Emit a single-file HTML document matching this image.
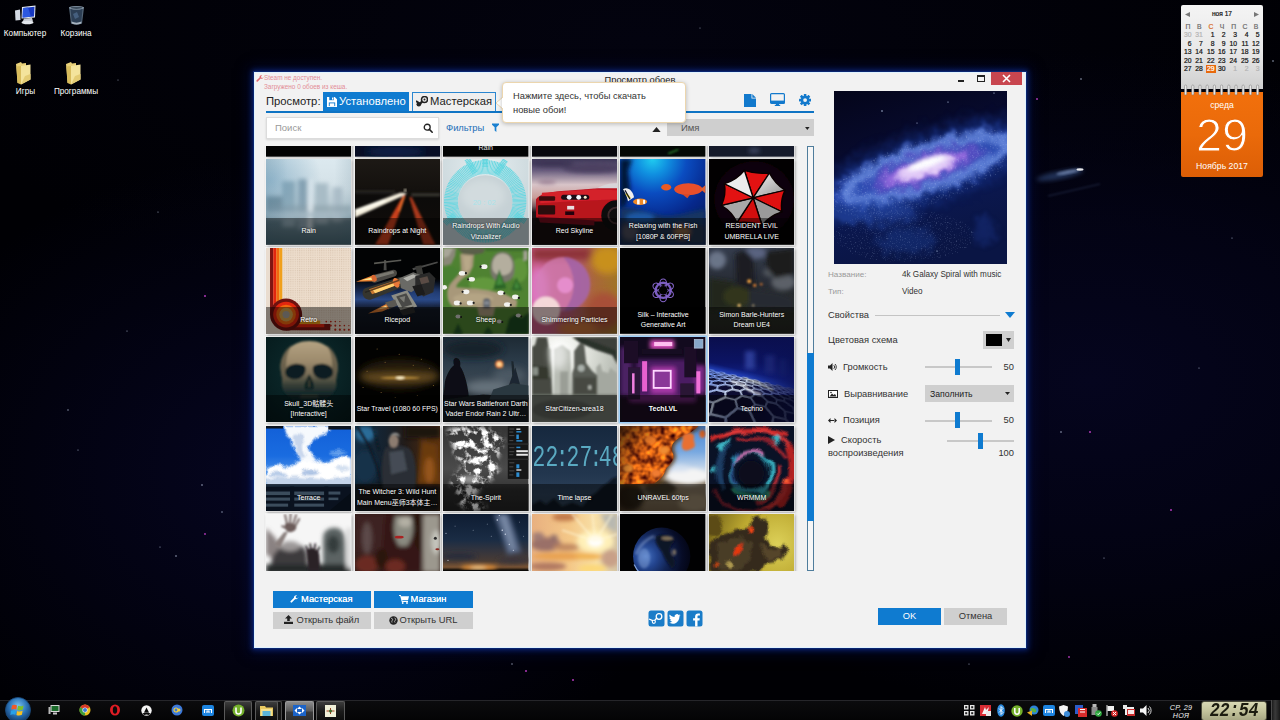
<!DOCTYPE html>
<html lang="ru">
<head>
<meta charset="utf-8">
<title>Просмотр обоев</title>
<style>
*{box-sizing:border-box;margin:0;padding:0}
html,body{width:1280px;height:720px;overflow:hidden;background:#000004;font-family:"Liberation Sans","DejaVu Sans",sans-serif;}
.abs{position:absolute}
#desk{position:absolute;left:0;top:0;width:1280px;height:720px;overflow:hidden;
 background:
 radial-gradient(ellipse 520px 330px at 1090px 380px,#05051e 0%,rgba(4,4,26,.7) 50%,rgba(0,0,6,0) 100%),
 radial-gradient(ellipse 420px 320px at 300px 470px,#060622 0%,rgba(4,4,26,.7) 50%,rgba(0,0,6,0) 100%),
 radial-gradient(ellipse 700px 300px at 640px 40px,#03030f 0%,rgba(0,0,6,0) 100%),
 #000004;}
/* window */
#win{position:absolute;left:254px;top:72px;width:772px;height:576px;background:#f2f2f2;
 box-shadow:0 0 0 1px #0a2570,0 0 5px 2px #0a2272,0 0 13px 4px rgba(8,22,90,.5);outline:1px solid #dff2ff;outline-offset:-1px}
#win *{position:absolute}
.t{white-space:nowrap;line-height:1}

.th{width:85.400px;height:85.700px;overflow:hidden;box-shadow:0 0 0 1px rgba(255,255,255,.55),1px 1px 3px rgba(0,0,0,.45)}
.th.hl{box-shadow:0 0 0 1.500px #9ccdf6,1px 1px 3px rgba(0,0,0,.3)}
.th svg{left:0;top:0;width:85.400px;height:85.700px}
.lb{left:0;top:58.600px;width:85.400px;height:27.100px;background:rgba(0,0,0,.45);color:#fff;font-size:7px;line-height:10.200px;text-align:center;display:flex;align-items:center;justify-content:center;text-shadow:0 0 2px rgba(0,0,0,.8);font-family:"Liberation Sans","Noto Sans CJK SC",sans-serif;white-space:nowrap}
.lb span{position:static!important;display:block}
.lb b{position:static!important}

.dl{position:absolute;color:#fff;font-size:8.200px;line-height:1;white-space:nowrap;text-align:center;text-shadow:0 1px 2px #000,0 0 2px #000;transform:translateX(-50%)}
#cal div,#cal svg,#tb div,#tb svg{position:absolute}
.cd{-webkit-text-stroke:.2px currentColor;font-size:6.800px;line-height:1;color:#111;width:12px;text-align:center;white-space:nowrap}
</style>
</head>
<body>
<div id="desk">
<svg width="0" height="0" style="position:absolute"><defs>
<filter id="b05" x="-20%" y="-20%" width="140%" height="140%"><feGaussianBlur stdDeviation=".5"/></filter>
<filter id="b1" x="-20%" y="-20%" width="140%" height="140%"><feGaussianBlur stdDeviation="1"/></filter>
<filter id="b2" x="-30%" y="-30%" width="160%" height="160%"><feGaussianBlur stdDeviation="2"/></filter>
<filter id="b3" x="-40%" y="-40%" width="180%" height="180%"><feGaussianBlur stdDeviation="3.500"/></filter>
<filter id="b6" x="-50%" y="-50%" width="200%" height="200%"><feGaussianBlur stdDeviation="7"/></filter>
<filter id="warp" x="-10%" y="-10%" width="120%" height="120%" color-interpolation-filters="sRGB"><feTurbulence type="fractalNoise" baseFrequency=".06" numOctaves="2" seed="3" result="n"/><feDisplacementMap in="SourceGraphic" in2="n" scale="9" xChannelSelector="R" yChannelSelector="G"/></filter>
<filter id="warp2" x="-10%" y="-10%" width="120%" height="120%" color-interpolation-filters="sRGB"><feTurbulence type="fractalNoise" baseFrequency=".12" numOctaves="2" seed="11" result="n"/><feDisplacementMap in="SourceGraphic" in2="n" scale="6" xChannelSelector="R" yChannelSelector="G"/></filter>
<linearGradient id="vigL" x1="0" y1="0" x2="1" y2="0"><stop offset="0" stop-color="#3c6478" stop-opacity=".6"/><stop offset=".25" stop-color="#3c6478" stop-opacity="0"/><stop offset=".8" stop-color="#3c6478" stop-opacity="0"/><stop offset="1" stop-color="#3c6478" stop-opacity=".4"/></linearGradient>
</defs></svg>

<svg class="abs" style="left:0;top:0" width="1280" height="720" viewBox="0 0 1280 720"><ellipse cx="1060" cy="175" rx="24" ry="4" fill="#4468a8" opacity=".45" filter="url(#b2)" transform="rotate(-11 1060 175)"/><ellipse cx="1068" cy="172" rx="12" ry="2" fill="#9cb4e0" opacity=".5" filter="url(#b1)" transform="rotate(-11 1068 172)"/><ellipse cx="1080" cy="169.500" rx="3.500" ry="1.200" fill="#fff" opacity=".9" filter="url(#b05)"/><path d="M1048 196L1100 184" stroke="#5c74a8" stroke-width="1" opacity=".35" filter="url(#b1)"/><g fill="#b038b8"><circle cx="1037" cy="99" r="1"/><circle cx="205" cy="296" r="1"/><circle cx="1171" cy="510" r="1"/><circle cx="1090" cy="432" r="1"/><circle cx="526" cy="671" r="1"/><circle cx="573" cy="680" r="1"/><circle cx="1069" cy="657" r=".9"/><circle cx="205" cy="534" r=".9"/></g><g fill="#c8d4f0" opacity=".8"><circle cx="1081" cy="79" r=".8"/><circle cx="1061" cy="432" r=".8"/><circle cx="158" cy="212" r=".6"/><circle cx="127" cy="331" r=".6"/><circle cx="68" cy="410" r=".7"/><circle cx="78" cy="450" r=".6"/><circle cx="202" cy="485" r=".8"/><circle cx="222" cy="512" r=".7"/><circle cx="176" cy="556" r=".8"/><circle cx="160" cy="547" r=".6"/><circle cx="1273" cy="61" r=".8"/><circle cx="1232" cy="238" r=".6"/><circle cx="1199" cy="368" r=".6"/><circle cx="1104" cy="558" r=".6"/><circle cx="512" cy="664" r=".7"/><circle cx="969" cy="664" r=".6"/><circle cx="700" cy="28" r=".5"/><circle cx="118" cy="80" r=".5"/></g></svg>
<!-- WINDOW -->
<div id="win">
<!--HEADER-->
<!-- status -->
<svg style="left:2px;top:3px" width="8" height="8" viewBox="0 0 16 16"><path d="M15 3.5a4 4 0 0 1-5.6 3.7L3.6 13a1.6 1.6 0 0 1-2.3-2.3l5.8-5.8A4 4 0 0 1 12.500 0.600L10 3l.7 2.300L13 6l2.200-2.500z" fill="#e06a72"/></svg>
<div class="t" style="left:10px;top:2.500px;font-size:6.400px;color:#e38d96">Steam не доступен.</div>
<div class="t" style="left:10px;top:11.500px;font-size:6.400px;color:#e38d96">Загружено 0 обоев из кеша.</div>
<!-- title -->
<div class="t" style="left:0;top:3.500px;width:772px;text-align:center;font-size:9.300px;color:#222">Просмотр обоев</div>
<!-- window buttons -->
<div style="left:704px;top:8px;width:6px;height:2px;background:#222"></div>
<div style="left:723px;top:3px;width:8px;height:7px;border:1px solid #222;border-top-width:2px"></div>
<div style="left:737px;top:0;width:31px;height:13px;background:#c8464f"></div>
<svg style="left:748px;top:2px" width="9" height="9" viewBox="0 0 9 9"><path d="M1 1l7 7M8 1l-7 7" stroke="#fff" stroke-width="1.600"/></svg>

<!-- tabs -->
<div class="t" style="left:12px;top:24px;font-size:11.250px;color:#222">Просмотр:</div>
<div style="left:69px;top:20px;width:86px;height:20px;background:#0f7bd0"></div>
<svg style="left:73px;top:24.500px" width="10" height="10" viewBox="0 0 11 11"><path d="M0 0h8.500L11 2.500V11H0z" fill="#fff"/><rect x="2.500" y="0" width="5" height="3.500" fill="#0f7bd0"/><rect x="5.500" y=".6" width="1.400" height="2.300" fill="#fff"/><rect x="2" y="6" width="7" height="4" fill="#0f7bd0"/><rect x="3" y="7" width="5" height="3" fill="#fff"/></svg>
<div class="t" style="left:85px;top:24px;font-size:11.250px;color:#fff">Установлено</div>
<div style="left:158px;top:20px;width:84px;height:20px;background:#efefef;border:1px solid #2a86d0"></div>
<svg style="left:162px;top:24px" width="12" height="11" viewBox="0 0 12 11"><circle cx="8.500" cy="3.500" r="3" fill="none" stroke="#222" stroke-width="1.500"/><circle cx="8.500" cy="3.500" r="1" fill="#222"/><path d="M6.300 5.200L3.500 8.500" stroke="#222" stroke-width="2.200"/><circle cx="2.800" cy="8.300" r="2.300" fill="#222"/><path d="M0 5l3 2" stroke="#222" stroke-width="2"/></svg>
<div class="t" style="left:176px;top:24px;font-size:11.250px;color:#222">Мастерская</div>
<!-- blue bar -->
<div style="left:12px;top:38.700px;width:547.800px;height:2px;background:#0f74c4"></div>
<!-- toolbar icons -->
<svg style="left:490px;top:21.700px" width="12" height="13.200" viewBox="0 0 12 13.200"><path d="M0 0h7.500v4.500H12v8.700H0z" fill="#1279cc"/><path d="M8.300 0L12 3.700H8.300z" fill="#1279cc"/></svg>
<svg style="left:516px;top:21.200px" width="15" height="13" viewBox="0 0 15 13"><rect x=".6" y=".6" width="13.800" height="9.800" rx="1" fill="#f2f2f2" stroke="#1279cc" stroke-width="1.200"/><rect x=".6" y="7.600" width="13.800" height="2.800" fill="#1279cc"/><rect x="6" y="10.400" width="3" height="1.600" fill="#1279cc"/><rect x="4.800" y="11.800" width="5.400" height="1.200" fill="#1279cc"/></svg>
<svg style="left:544.800px;top:22px" width="12.200" height="12.200" viewBox="-7 -7 14 14"><g fill="#1279cc"><circle r="5"/><g id="tt"><rect x="-1.500" y="-7" width="3" height="14" rx=".4"/></g><use href="#tt" transform="rotate(45)"/><use href="#tt" transform="rotate(90)"/><use href="#tt" transform="rotate(135)"/></g><circle r="2.200" fill="#f2f2f2"/></svg>

<!-- search -->
<div style="left:12px;top:45px;width:173px;height:22px;background:#fff;border:1px solid #dcdcdc;box-shadow:0 1px 2px rgba(0,0,0,.12)"></div>
<div class="t" style="left:21px;top:51px;font-size:9.500px;color:#9a9a9a">Поиск</div>
<svg style="left:168.500px;top:51px" width="10.500" height="10.500" viewBox="0 0 12 12"><circle cx="4.800" cy="4.800" r="3.400" fill="none" stroke="#222" stroke-width="1.500"/><path d="M7.300 7.300l3.200 3.200" stroke="#222" stroke-width="1.800" stroke-linecap="round"/></svg>
<div class="t" style="left:192px;top:51px;font-size:9.400px;color:#1c6fb8">Фильтры</div>
<svg style="left:237.500px;top:51px" width="7" height="9.500" viewBox="0 0 9 11"><path d="M0 0h9v1.500L5.600 5v6L3.400 9V5L0 1.500z" fill="#1a80d0"/></svg>
<!-- sort -->
<svg style="left:398px;top:54.500px" width="9" height="5" viewBox="0 0 10 6"><path d="M0 6L5 0l5 6z" fill="#222"/></svg>
<div style="left:413px;top:47px;width:146.800px;height:17px;background:#cfcfcf"></div>
<div class="t" style="left:427px;top:51px;font-size:9.500px;color:#555">Имя</div>
<svg style="left:551.400px;top:54.600px" width="4.600" height="3" viewBox="0 0 6 4"><path d="M0 0h6L3 4z" fill="#222"/></svg>

<!-- tooltip -->
<svg style="left:242px;top:24px" width="8" height="14" viewBox="0 0 8 14"><path d="M8 0L0 7l8 7z" fill="#fff" stroke="#ecd6ae" stroke-width="1"/></svg>
<div style="left:248px;top:10px;width:184px;height:41px;background:#fff;border:1px solid #ecd6ae;border-radius:4px;box-shadow:0 1px 4px rgba(0,0,0,.25)"></div>
<div style="left:248px;top:26px;width:2px;height:10px;background:#fff"></div>
<div class="t" style="left:259px;top:20px;font-size:9.330px;color:#333">Нажмите здесь, чтобы скачать</div>
<div class="t" style="left:259px;top:34px;font-size:9.330px;color:#333">новые обои!</div>
<!--/HEADER-->
<!--GRID-->
<div id="grid" style="left:10px;top:74px;width:536px;height:424.500px;overflow:hidden">
<div class="th" style="left:2.0px;top:-75.2px"><svg viewBox="0 0 85 85" preserveAspectRatio="none"><rect width="85" height="85" fill="#020202"/></svg></div>
<div class="th" style="left:90.6px;top:-75.2px"><svg viewBox="0 0 85 85" preserveAspectRatio="none"><rect width="85" height="85" fill="#070d24"/><ellipse cx="40" cy="80" rx="30" ry="5" fill="#10204a" filter="url(#b3)"/></svg></div>
<div class="th" style="left:179.2px;top:-75.2px"><svg viewBox="0 0 85 85" preserveAspectRatio="none"><rect width="85" height="85" fill="#030303"/><text x="42.500" y="78.500" font-size="7" fill="#e8e8e8" text-anchor="middle" font-family="Liberation Sans,sans-serif">Rain</text></svg></div>
<div class="th" style="left:267.8px;top:-75.2px"><svg viewBox="0 0 85 85" preserveAspectRatio="none"><rect width="85" height="85" fill="#08080e"/></svg></div>
<div class="th" style="left:356.4px;top:-75.2px"><svg viewBox="0 0 85 85" preserveAspectRatio="none"><rect width="85" height="85" fill="#040806"/><path d="M48 82l10-4" stroke="#2c8a30" stroke-width="1.500" filter="url(#b1)"/></svg></div>
<div class="th" style="left:445.0px;top:-75.2px"><svg viewBox="0 0 85 85" preserveAspectRatio="none"><rect width="85" height="85" fill="#161b2b"/><ellipse cx="45" cy="79" rx="6" ry="3" fill="#39405a" filter="url(#b2)"/></svg></div>
<div class="th" style="left:2.0px;top:13.4px"><svg viewBox="0 0 85 85" preserveAspectRatio="none"><linearGradient id="g_rain" x1="0" y1="0" x2="0" y2="1"><stop offset="0" stop-color="#dce9ef"/><stop offset=".35" stop-color="#d4e1e7"/><stop offset=".62" stop-color="#b4c6cf"/><stop offset=".72" stop-color="#6e8a96"/><stop offset="1" stop-color="#486672"/></linearGradient>
<rect width="85" height="85" fill="url(#g_rain)"/>
<g filter="url(#b2)"><rect x="16" y="22" width="13" height="45" fill="#98b0bc"/><rect x="32" y="20" width="9" height="50" fill="#8ea6b4"/><rect x="49" y="24" width="13" height="40" fill="#a8bcc6"/><rect x="66" y="28" width="10" height="34" fill="#aec0ca"/><rect x="0" y="37" width="16" height="22" fill="#80949e"/><rect x="0" y="46" width="85" height="14" fill="#8a9ea8" opacity=".6"/><rect x="42" y="20" width="4" height="52" fill="#e9f1f5"/><rect x="0" y="52" width="85" height="7" fill="#a9bcc5" opacity=".8"/></g>
<rect width="85" height="85" fill="url(#vigL)" opacity=".35"/>
<radialGradient id="g_rain2" cx=".05" cy=".25" r=".6"><stop offset="0" stop-color="#5f96b8" stop-opacity=".5"/><stop offset="1" stop-color="#4f86a8" stop-opacity="0"/></radialGradient><rect width="85" height="85" fill="url(#g_rain2)"/></svg><div class="lb"><span>Rain</span></div></div>
<div class="th" style="left:90.6px;top:13.4px"><svg viewBox="0 0 85 85" preserveAspectRatio="none"><linearGradient id="g_rn" x1="0" y1="0" x2="0" y2="1"><stop offset="0" stop-color="#1d1915"/><stop offset=".35" stop-color="#14110e"/><stop offset=".45" stop-color="#0c0b0a"/><stop offset="1" stop-color="#120d0a"/></linearGradient>
<rect width="85" height="85" fill="url(#g_rn)"/>
<g filter="url(#b1)"><path d="M0 50L45 33.500L52 33.500L48 36.500L0 58z" fill="#f4eedc"/><path d="M0 52L30 41" stroke="#fffdf0" stroke-width="3"/>
<path d="M48 36L50.500 36L33 85L20 85z" fill="#c8401c"/><path d="M54 38L56.500 38L80 85L68 85z" fill="#a8381a"/><path d="M49 36L44 52" stroke="#f07a30" stroke-width="1.500"/>
<rect x="56" y="34" width="29" height="3" fill="#4a463e" opacity=".7"/><rect x="0" y="31" width="40" height="3" fill="#3a3832" opacity=".5"/></g>
<circle cx="50" cy="31" r="1.200" fill="#e8e0c8" filter="url(#b1)"/></svg><div class="lb"><span>Raindrops at Night</span></div></div>
<div class="th" style="left:179.2px;top:13.4px"><svg viewBox="0 0 85 85" preserveAspectRatio="none"><rect width="85" height="85" fill="#d3e0e4"/>
<radialGradient id="g_ra" cx=".5" cy=".1" r=".8"><stop offset="0" stop-color="#e6eef0"/><stop offset="1" stop-color="#c2d0d5"/></radialGradient><rect width="85" height="85" fill="url(#g_ra)"/>
<g filter="url(#b05)"><circle cx="42" cy="42" r="34" fill="none" stroke="#62d6e0" stroke-width="14" stroke-dasharray=".9 .45" opacity=".95"/><path d="M24 0l8 14M62 1l-9 14M2 64l10-9M82 62l-10-7M42 0v8" stroke="#62d6e0" stroke-width="6" stroke-dasharray=".9 .45"/></g>
<circle cx="42" cy="43" r="27" fill="#c6d1d5"/><ellipse cx="40" cy="36" rx="22" ry="16" fill="#d2dbde" filter="url(#b3)"/>
<text x="41" y="46" font-size="7.500" fill="#a8e3ea" text-anchor="middle" font-family="Liberation Sans,sans-serif">20 : 02</text></svg><div class="lb"><span>Raindrops With Audio<br>Vizualizer</span></div></div>
<div class="th" style="left:267.8px;top:13.4px"><svg viewBox="0 0 85 85" preserveAspectRatio="none"><linearGradient id="g_sk" x1="0" y1="0" x2="0" y2="1"><stop offset="0" stop-color="#3e3858"/><stop offset=".14" stop-color="#6c6080"/><stop offset=".3" stop-color="#d8c4c8"/><stop offset=".45" stop-color="#c89c98"/><stop offset=".55" stop-color="#7a5a60"/><stop offset=".62" stop-color="#1c1519"/><stop offset="1" stop-color="#0d0a0c"/></linearGradient>
<rect width="85" height="85" fill="url(#g_sk)"/>
<g filter="url(#b2)"><ellipse cx="60" cy="9" rx="30" ry="5" fill="#4c4060"/><ellipse cx="20" cy="4" rx="22" ry="4" fill="#3c3654"/><ellipse cx="15" cy="23" rx="9" ry="1.500" fill="#8a6c84"/></g>
<g filter="url(#b05)"><path d="M64 30C70 25 78 24 85 24L85 32z" fill="#d8d4d8"/><path d="M4 40C8 34 20 32 40 31L66 29L85 29L85 72L60 70L10 66L4 58z" fill="#b8121f"/><path d="M10 33.500L62 30L85 31L85 40L40 42L8 44z" fill="#d4202c"/>
<rect x="7" y="37" width="16" height="4.500" rx="1" fill="#3a0c10"/><rect x="6" y="46" width="17" height="9" rx="1" fill="#2a0a0e"/><rect x="33" y="52" width="9" height="3.500" fill="#200608"/>
<rect x="29" y="35.500" width="28" height="5" rx="2.500" fill="#1c1018"/><circle cx="37" cy="38" r="2.400" fill="#eef4ff"/><circle cx="46.500" cy="38" r="2.400" fill="#f8fbff"/><circle cx="53" cy="38" r="1.500" fill="#f8e8c8"/>
<rect x="35" y="46.500" width="7" height="3.600" fill="#e8e0e0"/><path d="M4 58L60 62L85 62L85 85L0 85z" fill="#140d10"/><path d="M6 57L62 61L62 66L8 63z" fill="#70101a"/>
<circle cx="84" cy="56" r="15" fill="#0c080a"/><circle cx="84" cy="56" r="8" fill="none" stroke="#3a2a2c" stroke-width="2"/></g></svg><div class="lb"><span>Red Skyline</span></div></div>
<div class="th" style="left:356.4px;top:13.4px"><svg viewBox="0 0 85 85" preserveAspectRatio="none"><radialGradient id="g_fi" cx=".38" cy="0" r="1"><stop offset="0" stop-color="#20ccf0"/><stop offset=".18" stop-color="#1090e0"/><stop offset=".4" stop-color="#0a4cc0"/><stop offset=".7" stop-color="#06288c"/><stop offset="1" stop-color="#051c5c"/></radialGradient>
<rect width="85" height="85" fill="url(#g_fi)"/>
<g filter="url(#b2)"><path d="M0 0L12 0L8 12L10 30L6 45L0 50z" fill="#051838"/><path d="M0 50C10 46 25 52 36 55C50 60 70 52 85 50L85 85L0 85z" fill="#123462"/><ellipse cx="20" cy="58" rx="14" ry="5" fill="#1d58a4"/><path d="M0 62L85 66L85 85L0 85z" fill="#22304a"/><ellipse cx="62" cy="72" rx="8" ry="7" fill="#7a5a40"/><ellipse cx="10" cy="72" rx="8" ry="8" fill="#4a4858"/></g>
<g filter="url(#b05)"><ellipse cx="68" cy="30" rx="14" ry="6" fill="#e8502c"/><path d="M80 30l5-4v8z" fill="#e06030"/><path d="M62 35l5 4l3-4z" fill="#d84828"/><ellipse cx="46" cy="28" rx="5" ry="3.200" fill="#ea5a20"/>
<ellipse cx="20" cy="42.500" rx="7" ry="3.200" fill="#f08a28"/><rect x="17" y="40" width="2.500" height="5" fill="#fff"/><rect x="23" y="40.500" width="2" height="4" fill="#fff"/>
<path d="M3 30C8 27 13 32 14 38L8 42C7 37 5 33 3 30z" fill="#f0f0f0"/><path d="M6 34l4 5" stroke="#e8d020" stroke-width="2"/><path d="M5 31l5 9" stroke="#101020" stroke-width="1.200"/></g></svg><div class="lb"><span>Relaxing with the Fish<br>[1080P &amp; 60FPS]</span></div></div>
<div class="th" style="left:445.0px;top:13.4px"><svg viewBox="0 0 85 85" preserveAspectRatio="none"><rect width="85" height="85" fill="#020001"/><ellipse cx="45" cy="40" rx="40" ry="38" fill="#0e0507" filter="url(#b3)"/>
<linearGradient id="g_um" x1="0" y1="0" x2="1" y2="1"><stop offset="0" stop-color="#f2f2f2"/><stop offset="1" stop-color="#8c8c8c"/></linearGradient>
<g transform="translate(44 38.500) scale(.93 .8) rotate(7)" stroke="#0a0000" stroke-width="1.500" stroke-linejoin="round">
<path d="M0 0L-13.500 -32.600Q0 -29 13.500 -32.600z" fill="#e21212"/>
<path d="M0 0L13.500 -32.600Q21 -20 32.600 -13.500z" fill="url(#g_um)"/>
<path d="M0 0L32.600 -13.500Q29 0 32.600 13.500z" fill="#e01010"/>
<path d="M0 0L32.600 13.500Q20 20 13.500 32.600z" fill="#9a9a9a"/>
<path d="M0 0L13.500 32.600Q0 29 -13.500 32.600z" fill="#d40e0e"/>
<path d="M0 0L-13.500 32.600Q-20 20 -32.600 13.500z" fill="#a8a8a8"/>
<path d="M0 0L-32.600 13.500Q-29 0 -32.600 -13.500z" fill="#e21212"/>
<path d="M0 0L-32.600 -13.500Q-20 -20 -13.500 -32.600z" fill="#ececec"/></g></svg><div class="lb"><span>RESIDENT EVIL<br>UMBRELLA LIVE</span></div></div>
<div class="th" style="left:2.0px;top:102.1px"><svg viewBox="0 0 85 85" preserveAspectRatio="none"><rect width="85" height="85" fill="#ebdac8"/>
<pattern id="p_re" width="2.200" height="2.200" patternUnits="userSpaceOnUse"><rect width="2.200" height="2.200" fill="#ecdccb"/><rect width="1" height="1" fill="#d9c5b0"/></pattern><rect x="17" width="68" height="85" fill="url(#p_re)"/>
<rect x="0" y="0" width="4" height="85" fill="#e9dccf"/>
<rect x="4" y="0" width="3.200" height="66" fill="#7e1512"/><rect x="7.200" y="0" width="3" height="66" fill="#e2260f"/><rect x="10.200" y="0" width="3" height="66" fill="#f0680f"/><rect x="13.200" y="0" width="3" height="66" fill="#f0a01c"/>
<path d="M20 75.500H64V81.500H20z" fill="#7e1512"/><path d="M20 75.500H58V78.500H20z" fill="#e2260f"/><rect x="20" y="72" width="34" height="3.500" fill="#f0a01c"/>
<circle cx="20" cy="66" r="16" fill="#6e1210"/><circle cx="20" cy="66" r="12.800" fill="#e2260f"/><circle cx="20" cy="66" r="9.800" fill="#f0680f"/><circle cx="20" cy="66" r="6.800" fill="#d8a44c"/><circle cx="20" cy="66" r="3.600" fill="#a8a29c"/>
<g fill="#c02818"><circle cx="60" cy="73" r=".9"/><circle cx="64.500" cy="73" r=".9"/><circle cx="69" cy="73" r=".8"/><circle cx="73.500" cy="73" r=".7"/><circle cx="64.500" cy="77" r="1"/><circle cx="69" cy="77" r="1"/><circle cx="73.500" cy="77" r=".9"/><circle cx="78" cy="77" r=".8"/><circle cx="82.500" cy="77" r=".7"/><circle cx="69" cy="81" r="1.100"/><circle cx="73.500" cy="81" r="1.100"/><circle cx="78" cy="81" r="1"/><circle cx="82.500" cy="81" r="1"/></g></svg><div class="lb"><span>Retro</span></div></div>
<div class="th" style="left:90.6px;top:102.1px"><svg viewBox="0 0 85 85" preserveAspectRatio="none"><rect width="85" height="85" fill="#020304"/>
<linearGradient id="g_rp" x1="0" y1="0" x2="0" y2="1"><stop offset=".36" stop-color="#020304"/><stop offset=".5" stop-color="#16284e"/><stop offset=".6" stop-color="#2a4884"/><stop offset=".66" stop-color="#1c2c50"/><stop offset=".72" stop-color="#121824"/><stop offset="1" stop-color="#0c1018"/></linearGradient><rect width="85" height="85" fill="url(#g_rp)"/>
<ellipse cx="70" cy="46" rx="22" ry="7" fill="#2c4c8c" opacity=".6" filter="url(#b3)"/>
<g filter="url(#b05)">
<path d="M29 12L31 12L31.500 22L28.500 22z" fill="#4a4a46"/><path d="M19 14.500L46 11.500L46 12.800L19 16z" fill="#5a5a54"/>
<path d="M57 20L82 13.500L82.500 15L58 22z" fill="#4a4a48"/><path d="M60 18L66 17L68 26L62 27z" fill="#3a3a38"/>
<path d="M17 27L38 21.500C42 21 43 26 40 28L20 34.500C16 35 14 29 17 27z" fill="#4c4a44"/><path d="M20 27L38 22.500L39 25L21 30z" fill="#7a7870"/>
<path d="M1 33.500L18 27L20 33z" fill="#e88030"/><path d="M6 32L19 28.500L19.500 31.500z" fill="#ffe890"/><ellipse cx="19" cy="30" rx="2.500" ry="3.500" fill="#d86830" transform="rotate(-20 19 30)"/>
<path d="M10 40L44 29C50 28 52 36 47 39L16 51C8 53 5 43 10 40z" fill="#36342e"/><path d="M14 41L44 31L46 35L17 46z" fill="#c87830"/><path d="M18 42L40 34.500L41 37L20 45z" fill="#ffd070"/><ellipse cx="41" cy="34.500" rx="3" ry="5" fill="#e87838" transform="rotate(-20 41 34.500)"/><path d="M10 44L44 32" stroke="#1c1c18" stroke-width="1.500" opacity=".6"/>
<path d="M44 30L58 24L66 27L68 36L56 44L46 40z" fill="#6a6a66"/><path d="M48 30L58 26L62 28L52 33z" fill="#b4b4ae"/>
<path d="M60 28L74 24L80 30L78 44L68 48L60 40z" fill="#2c2c2c"/><path d="M64 30L72 28L74 34L66 36z" fill="#5a4c44"/><path d="M57 38L66 36L70 46L62 48z" fill="#1c1c1e"/>
<path d="M36 47L52 42L62 58L46 63z" fill="#8c8c84"/><path d="M41 48L51 45L57 56L47 59z" fill="#4a4a46"/><path d="M44 49L50 47.500L49 54z" fill="#7a7a74"/>
<path d="M30 54L40 51L42 57L33 61z" fill="#5a5852"/><path d="M13 65L31 55.500L34 60L27 63z" fill="#d87830"/><path d="M22 61L31 57L32 59.500z" fill="#ffd080"/>
<path d="M44 62L58 58L60 64L48 67z" fill="#2c2c2a"/></g></svg><div class="lb"><span>Ricepod</span></div></div>
<div class="th" style="left:179.2px;top:102.1px"><svg viewBox="0 0 85 85" preserveAspectRatio="none"><rect width="85" height="85" fill="#4f8232"/>
<g filter="url(#b1)"><ellipse cx="8" cy="28" rx="10" ry="10" fill="#4a8030"/><ellipse cx="40" cy="36" rx="14" ry="7" fill="#62983e"/><ellipse cx="76" cy="22" rx="8" ry="12" fill="#5e943a"/>
<path d="M17 6L31 5L30 18L26 26C20 30 14 34 13 39C30 40 50 42 62 46L74 52L73 59L52 59L50 68L36 68L34 59L10 58C4 54 3 44 6 38C9 32 16 28 18 22z" fill="#a8987a"/><path d="M20 8L28 8L27 20L22 24z" fill="#b8a888"/><ellipse cx="30" cy="50" rx="20" ry="5" fill="#b4a484"/>
<path d="M0 0L13 0L12 8L8 16L0 18z" fill="#8a8878"/><path d="M0 0L10 0L6 8L0 10z" fill="#a8a698"/><path d="M14 0L42 0L40 5L30 7L20 6z" fill="#5a5e48"/><rect x="42" y="0" width="43" height="3" fill="#3e6a2c"/>
<path d="M47 20C47 8 54 3 60 4C68 4 72 12 71 22C71 30 66 34 60 34C52 34 47 30 47 20z" fill="#77766a"/><path d="M49 18C49 9 55 5 60 5.500C66 6 70 12 69 19C68 25 64 27 59 27C53 27 49 24 49 18z" fill="#b4ae9e"/>
<path d="M80 4C81 2 84 2 84 5L84 12L80 13z" fill="#a4a296"/>
<path d="M56 21L63 40L50 41z" fill="#2a6428"/><path d="M56 24L60 36L53 37z" fill="#448a3a"/><path d="M73 29L79 42L68 42z" fill="#2a6428"/><path d="M73 32L76 40L71 40z" fill="#448a3a"/>
<path d="M40 52C40 49 47 49 47 52L47 60L40 60z" fill="#5c626a"/><rect x="41" y="53" width="5" height="3" fill="#8a9098"/>
<path d="M62 85L66 70L72 66L78 70L85 64L85 85z" fill="#1e4a20"/><path d="M10 85L15 75L20 85z" fill="#245226"/><path d="M40 85L45 78L50 85z" fill="#245226"/></g>
<g filter="url(#b05)"><g fill="#f2f2ee"><ellipse cx="41" cy="18.500" rx="3.300" ry="2.300"/><ellipse cx="19" cy="25" rx="3.300" ry="2.300"/><ellipse cx="28.500" cy="31" rx="3.300" ry="2.300"/><ellipse cx="1.500" cy="39" rx="2.500" ry="2.300"/><ellipse cx="23" cy="43.500" rx="3.300" ry="2.300"/><ellipse cx="57.500" cy="44.500" rx="3.300" ry="2.300"/><ellipse cx="72" cy="48.500" rx="3.300" ry="2.300"/><ellipse cx="14" cy="54.500" rx="3.300" ry="2.300"/><ellipse cx="27" cy="54.500" rx="3.300" ry="2.300"/><ellipse cx="64" cy="56" rx="3.300" ry="2.300"/><ellipse cx="15" cy="68" rx="2.600" ry="2" fill="#c8c8c4"/><ellipse cx="75" cy="67" rx="2.600" ry="2" fill="#c8c8c4"/><ellipse cx="56" cy="73" rx="2.600" ry="2" fill="#c8c8c4"/></g>
<g fill="#1c1c1c"><circle cx="37.500" cy="18.500" r="1.100"/><circle cx="22.800" cy="25" r="1.100"/><circle cx="25" cy="31" r="1.100"/><circle cx="19.500" cy="43.500" r="1.100"/><circle cx="61" cy="45" r="1.100"/><circle cx="75.500" cy="49.500" r="1.100"/><circle cx="17.500" cy="55" r="1.100"/><circle cx="30.500" cy="54.500" r="1.100"/><circle cx="67.500" cy="56.500" r="1.100"/><circle cx="18" cy="68.500" r="1"/><circle cx="78" cy="68" r="1"/><circle cx="59" cy="73.500" r="1"/></g></g></svg><div class="lb"><span>Sheep</span></div></div>
<div class="th" style="left:267.8px;top:102.1px"><svg viewBox="0 0 85 85" preserveAspectRatio="none"><linearGradient id="g_sh" x1="0" y1="0" x2="1" y2="0"><stop offset="0" stop-color="#c45880"/><stop offset=".45" stop-color="#b45870"/><stop offset=".75" stop-color="#a86838"/><stop offset="1" stop-color="#a07428"/></linearGradient>
<rect width="85" height="85" fill="url(#g_sh)"/>
<g filter="url(#b3)"><rect x="0" y="0" width="60" height="12" fill="#8c3038"/><ellipse cx="75" cy="12" rx="16" ry="14" fill="#c8901c"/><ellipse cx="6" cy="40" rx="10" ry="22" fill="#dc78c0"/><ellipse cx="72" cy="62" rx="18" ry="18" fill="#a85038"/><ellipse cx="45" cy="80" rx="20" ry="8" fill="#c07038"/></g>
<g filter="url(#b1)"><circle cx="31" cy="36" r="27" fill="#d480b8" opacity=".7"/><path d="M31 9A27 27 0 0 1 31 63A40 40 0 0 0 31 9z" fill="#8a58a8" opacity=".55"/><circle cx="33" cy="37" r="8" fill="#e890d0" opacity=".9"/><circle cx="14" cy="62" r="14" fill="#f6e0dc" opacity=".92"/></g></svg><div class="lb"><span>Shimmering Particles</span></div></div>
<div class="th" style="left:356.4px;top:102.1px"><svg viewBox="0 0 85 85" preserveAspectRatio="none"><rect width="85" height="85" fill="#010101"/>
<g transform="translate(43 42)" fill="none" stroke="#8464c8" stroke-width="1.100" filter="url(#b05)"><circle r="7.500" stroke-width="2.400" stroke="#7a5cc0"/><g id="sk1"><ellipse cx="0" cy="-7.500" rx="3.200" ry="3.800"/></g><use href="#sk1" transform="rotate(60)"/><use href="#sk1" transform="rotate(120)"/><use href="#sk1" transform="rotate(180)"/><use href="#sk1" transform="rotate(240)"/><use href="#sk1" transform="rotate(300)"/></g>
<circle cx="43" cy="42" r="4.200" fill="#010101"/></svg><div class="lb"><span>Silk – Interactive<br>Generative Art</span></div></div>
<div class="th" style="left:445.0px;top:102.1px"><svg viewBox="0 0 85 85" preserveAspectRatio="none"><linearGradient id="g_si" x1="0" y1="0" x2="0" y2="1"><stop offset="0" stop-color="#343c4c"/><stop offset=".45" stop-color="#262a32"/><stop offset=".7" stop-color="#2a2e26"/><stop offset="1" stop-color="#23241f"/></linearGradient>
<rect width="85" height="85" fill="url(#g_si)"/>
<g filter="url(#b2)"><ellipse cx="8" cy="12" rx="9" ry="9" fill="#6a7488"/><ellipse cx="46" cy="5" rx="12" ry="6" fill="#5a6480"/><ellipse cx="74" cy="34" rx="12" ry="8" fill="#5c6068"/><ellipse cx="62" cy="24" rx="8" ry="5" fill="#50545c"/><path d="M26 6L36 2L44 10L46 40L28 44z" fill="#1a1c22"/><path d="M56 4L85 0L85 26L66 30L58 20z" fill="#1c1f1c"/><path d="M0 30L26 34L30 60L0 62z" fill="#23281c"/><ellipse cx="28" cy="48" rx="14" ry="10" fill="#30361e"/><path d="M40 40L70 44L85 50L85 62L40 60z" fill="#282a30"/></g>
<g filter="url(#b1)"><circle cx="40" cy="33" r="2" fill="#f0a040"/><circle cx="45.500" cy="37" r="1.600" fill="#e08030"/><circle cx="52" cy="36" r="1.300" fill="#c87030"/><circle cx="30" cy="57" r="1.600" fill="#f0c070"/><circle cx="44" cy="57" r="1.200" fill="#a09070"/></g></svg><div class="lb"><span>Simon Barle-Hunters<br>Dream UE4</span></div></div>
<div class="th" style="left:2.0px;top:190.8px"><svg viewBox="0 0 85 85" preserveAspectRatio="none"><radialGradient id="g_sku" cx=".5" cy=".4" r=".75"><stop offset="0" stop-color="#0e2e30"/><stop offset="1" stop-color="#05181a"/></radialGradient><rect width="85" height="85" fill="url(#g_sku)"/>
<linearGradient id="g_sku2" x1="0" y1="0" x2="0" y2="1"><stop offset="0" stop-color="#b4a282"/><stop offset=".3" stop-color="#9c8a6c"/><stop offset=".48" stop-color="#7a6e58"/><stop offset=".62" stop-color="#3e443a"/><stop offset=".76" stop-color="#16282a"/><stop offset="1" stop-color="#0c2022" stop-opacity=".3"/></linearGradient>
<g filter="url(#b1)"><path d="M43 4C61 4 72 17 71.500 31C71 38 69 42 70 47C70 53 66 58 61 60L58 72L28 72L25 60C20 58 16 53 16 47C17 42 15 38 14.500 31C14 17 25 4 43 4z" fill="url(#g_sku2)"/>
<path d="M14.500 31C14 22 18 12 26 8C20 16 19 28 21 40L16 47C17 42 15 38 14.500 31z" fill="#5a5242" opacity=".7"/><path d="M71.500 31C72 22 68 12 60 8C66 16 67 28 65 40L70 47C69 42 71 38 71.500 31z" fill="#5a5242" opacity=".7"/>
<path d="M19.500 33C21 26 34 24.500 39 29C41 35 37 41.500 29 42C22 42 18 38 19.500 33z" fill="#0a1e20"/><path d="M66.500 33C65 26 52 24.500 47 29C45 35 49 41.500 57 42C64 42 68 38 66.500 33z" fill="#0a1e20"/><path d="M43 37C46 42 49 48 47 52L39 52C37 48 40 42 43 37z" fill="#0c2022"/><rect x="42.300" y="42" width="1.400" height="8" fill="#4a4438"/>
<path d="M34 58L52 58L52 60L34 60z" fill="#5a5848" opacity=".6"/></g></svg><div class="lb"><span>Skull_3D骷髅头<br>[Interactive]</span></div></div>
<div class="th" style="left:90.6px;top:190.8px"><svg viewBox="0 0 85 85" preserveAspectRatio="none"><rect width="85" height="85" fill="#020201"/>
<g filter="url(#b3)"><ellipse cx="44" cy="37" rx="40" ry="15" fill="#2c200c" opacity=".8"/><ellipse cx="44" cy="40" rx="40" ry="4.500" fill="#6a5020"/></g>
<g filter="url(#b1)"><ellipse cx="45" cy="40.500" rx="20" ry="1.300" fill="#b88c3c"/><ellipse cx="45" cy="40.500" rx="4.500" ry="1.800" fill="#fff0c8"/></g>
<g fill="#b08840" opacity=".8"><circle cx="22" cy="12" r=".5"/><circle cx="44" cy="17" r=".5"/><circle cx="66" cy="22" r=".5"/><circle cx="12" cy="34" r=".5"/><circle cx="74" cy="31" r=".5"/><circle cx="30" cy="25" r=".5"/><circle cx="58" cy="28" r=".5"/><circle cx="26" cy="55" r=".5"/><circle cx="62" cy="58" r=".5"/><circle cx="40" cy="60" r=".5"/><circle cx="78" cy="48" r=".5"/><circle cx="8" cy="50" r=".5"/></g></svg><div class="lb"><span>Star Travel (1080 60 FPS)</span></div></div>
<div class="th" style="left:179.2px;top:190.8px"><svg viewBox="0 0 85 85" preserveAspectRatio="none"><linearGradient id="g_sw" x1="0" y1="0" x2="0" y2="1"><stop offset="0" stop-color="#1d2a34"/><stop offset=".3" stop-color="#2c3c4a"/><stop offset=".55" stop-color="#3c4852"/><stop offset=".72" stop-color="#222a30"/><stop offset="1" stop-color="#0c1114"/></linearGradient>
<rect width="85" height="85" fill="url(#g_sw)"/>
<g filter="url(#b3)"><ellipse cx="44" cy="50" rx="22" ry="7" fill="#66727c"/><ellipse cx="30" cy="12" rx="30" ry="9" fill="#15202a"/><ellipse cx="66" cy="38" rx="16" ry="8" fill="#4c5864"/></g>
<g filter="url(#b05)"><path d="M12 21C16 20 18 24 17 29C22 36 25 50 26 62L0 64L2 44C4 36 8 30 11 28C10 25 10 22 12 21z" fill="#0a0e12"/><path d="M0 62L40 57L85 60L85 85L0 85z" fill="#141b20"/><path d="M68 24L70 24L74 52L70 54z" fill="#1c262e"/><path d="M72 30L78 52L84 60L60 60L64 52z" fill="#1e2830"/><path d="M50 52L70 46L85 48L85 62L46 62z" fill="#2c3840"/></g>
<g filter="url(#b1)"><circle cx="56" cy="27" r="4" fill="#f07830"/><circle cx="56" cy="27" r="2.300" fill="#ffe0a0"/><path d="M57 25l3 2l-1 4z" fill="#ffb060"/></g></svg><div class="lb"><span>Star Wars Battlefront Darth<br>Vader Endor Rain 2 Ultr…</span></div></div>
<div class="th" style="left:267.8px;top:190.8px"><svg viewBox="0 0 85 85" preserveAspectRatio="none"><radialGradient id="g_sc" cx=".32" cy=".18" r=".95"><stop offset="0" stop-color="#ffffff"/><stop offset=".25" stop-color="#eceee8"/><stop offset=".6" stop-color="#c4c8c0"/><stop offset="1" stop-color="#9ca098"/></radialGradient><rect width="85" height="85" fill="url(#g_sc)"/>
<g filter="url(#b1)"><path d="M22 12L30 8L38 14L40 58L22 58z" fill="#b8bcb4"/><path d="M64 30L68 26L70 34L76 36L78 30L82 34L85 36L85 58L64 58z" fill="#a4a8a0"/><path d="M28 34L36 34L36 58L28 58z" fill="#9a9e96"/>
<path d="M40 0L85 0L85 27L80 18L64 13L48 6z" fill="#2c302a"/><path d="M48 0L85 0L85 14L70 8z" fill="#3c403a"/>
<path d="M5 0L15 0L17 12L19 28L20 58L0 58L0 10L3 8z" fill="#464a42"/><path d="M0 28L16 30L16 42L0 42z" fill="#34382f"/><path d="M1 30L6 30L6 38L1 38z" fill="#8a9088"/><path d="M15 10L19 12L20 40L17 40z" fill="#80847c" opacity=".7"/>
<path d="M42 14L48 6L52 8L54 26L60 34L65 38L65 58L40 58L40 36L42 30z" fill="#585c54"/><path d="M42 40L64 40L64 58L42 58z" fill="#464a42"/><circle cx="49" cy="31" r="3.400" fill="#c4ccc8" opacity=".75"/><rect x="56" y="48" width="3" height="4" fill="#b4b8b0"/>
<rect x="0" y="57" width="85" height="28" fill="#70746c"/><ellipse cx="30" cy="72" rx="30" ry="10" fill="#5c6058"/></g>
<ellipse cx="26" cy="18" rx="9" ry="14" fill="#fff" opacity=".55" filter="url(#b3)"/></svg><div class="lb"><span>StarCitizen-area18</span></div></div>
<div class="th hl" style="left:356.4px;top:190.8px"><svg viewBox="0 0 85 85" preserveAspectRatio="none"><rect width="85" height="85" fill="#120a1e"/>
<g filter="url(#b2)"><rect x="16" y="22" width="58" height="36" fill="#4c1c64"/><rect x="31" y="30" width="24" height="26" fill="#a838a8"/><rect x="0" y="10" width="12" height="48" fill="#4c2064"/><rect x="74" y="28" width="11" height="28" fill="#7c2c88"/><rect x="30" y="3" width="24" height="9" fill="#e050c0"/><rect x="0" y="58" width="85" height="27" fill="#1c1024"/><rect x="10" y="58" width="65" height="6" fill="#702878"/></g>
<g filter="url(#b05)"><rect x="4" y="4" width="14" height="22" fill="#1c1028"/><rect x="22" y="12" width="40" height="5" fill="#160c20"/><rect x="64" y="10" width="12" height="30" fill="#1c1028"/><rect x="8" y="30" width="12" height="32" fill="#2c1438"/><rect x="60" y="46" width="14" height="14" fill="#2a1434"/><rect x="22" y="24" width="5" height="30" fill="#e860d0"/><rect x="76" y="34" width="4" height="22" fill="#f070d8"/><rect x="12" y="36" width="2.500" height="20" fill="#f080e0"/><rect x="34" y="5" width="18" height="4" fill="#ffc0f0"/>
<rect x="33.500" y="33.500" width="17" height="17" fill="#8a3898" stroke="#ffd8ff" stroke-width="1.800"/></g>
<rect x="74" y="2.500" width="8.500" height="8.500" fill="#9cc4e8" stroke="#c8e0f8" stroke-width=".8" opacity=".85"/></svg><div class="lb"><span><b>TechLVL</b></span></div></div>
<div class="th" style="left:445.0px;top:190.8px"><svg viewBox="0 0 85 85" preserveAspectRatio="none"><linearGradient id="g_te" x1="0" y1="0" x2="0" y2="1"><stop offset="0" stop-color="#0a0e4c"/><stop offset=".3" stop-color="#0c1464"/><stop offset=".5" stop-color="#14248c"/><stop offset="1" stop-color="#0a123c"/></linearGradient><rect width="85" height="85" fill="url(#g_te)"/>
<g filter="url(#b2)"><rect x="36" y="14" width="10" height="18" fill="#3448a8" opacity=".8"/><rect x="56" y="18" width="10" height="18" fill="#24348c" opacity=".8"/><rect x="70" y="22" width="8" height="16" fill="#1e2c80" opacity=".7"/></g>
<linearGradient id="g_te2" gradientUnits="userSpaceOnUse" x1="10" y1="30" x2="70" y2="85"><stop offset="0" stop-color="#7ca0ff"/><stop offset=".3" stop-color="#dce8ff"/><stop offset=".55" stop-color="#7c8cc0"/><stop offset="1" stop-color="#8c94b0"/></linearGradient>
<g transform="translate(0 8) rotate(13 40 40)"><rect x="-30" y="33" width="160" height="90" fill="#0c1444"/><rect x="-30" y="30" width="160" height="9" fill="#2040b8" filter="url(#b2)"/><g fill="#090d30" stroke="url(#g_te2)" stroke-linejoin="round" filter="url(#b05)"><path d="M-28.1 39.8L-24.8 38.2L-29.8 38.2L-39.0 39.8L-44.0 41.8L-38.0 41.8z" stroke-width="0.90"/><path d="M-17.4 36.7L-15.4 35.5L-19.7 35.5L-26.6 36.7L-29.8 38.2L-24.8 38.2z" stroke-width="0.90"/><path d="M-9.7 34.5L-8.4 33.6L-12.1 33.6L-17.6 34.5L-19.7 35.5L-15.4 35.5z" stroke-width="0.90"/><path d="M-26.0 41.8L-22.6 39.8L-28.1 39.8L-38.0 41.8L-43.5 44.3L-36.8 44.3z" stroke-width="0.94"/><path d="M-14.8 38.2L-12.8 36.7L-17.4 36.7L-24.8 38.2L-28.1 39.8L-22.6 39.8z" stroke-width="0.90"/><path d="M-6.9 35.5L-5.7 34.5L-9.7 34.5L-15.4 35.5L-17.4 36.7L-12.8 36.7z" stroke-width="0.90"/><path d="M-23.5 44.3L-20.0 41.8L-26.0 41.8L-36.8 44.3L-42.9 47.4L-35.4 47.4z" stroke-width="1.05"/><path d="M-11.7 39.8L-9.8 38.2L-14.8 38.2L-22.6 39.8L-26.0 41.8L-20.0 41.8z" stroke-width="0.90"/><path d="M-3.7 36.7L-2.6 35.5L-6.9 35.5L-12.8 36.7L-14.8 38.2L-9.8 38.2z" stroke-width="0.90"/><path d="M2.2 34.5L2.8 33.6L-1.0 33.6L-5.7 34.5L-6.9 35.5L-2.6 35.5z" stroke-width="0.90"/><path d="M-20.3 47.4L-16.8 44.3L-23.5 44.3L-35.4 47.4L-42.1 51.5L-33.5 51.5z" stroke-width="1.18"/><path d="M-8.0 41.8L-6.3 39.8L-11.7 39.8L-20.0 41.8L-23.5 44.3L-16.8 44.3z" stroke-width="0.94"/><path d="M0.1 38.2L0.9 36.7L-3.7 36.7L-9.8 38.2L-11.7 39.8L-6.3 39.8z" stroke-width="0.90"/><path d="M5.9 35.5L6.2 34.5L2.2 34.5L-2.6 35.5L-3.7 36.7L0.9 36.7z" stroke-width="0.90"/><path d="M-16.2 51.5L-12.8 47.4L-20.3 47.4L-33.5 51.5L-41.0 56.9L-30.9 56.9z" stroke-width="1.36"/><path d="M-3.4 44.3L-2.0 41.8L-8.0 41.8L-16.8 44.3L-20.3 47.4L-12.8 47.4z" stroke-width="1.05"/><path d="M4.6 39.8L5.1 38.2L0.1 38.2L-6.3 39.8L-8.0 41.8L-2.0 41.8z" stroke-width="0.90"/><path d="M10.1 36.7L10.2 35.5L5.9 35.5L0.9 36.7L0.1 38.2L5.1 38.2z" stroke-width="0.90"/><path d="M14.2 34.5L13.9 33.6L10.2 33.6L6.2 34.5L5.9 35.5L10.2 35.5z" stroke-width="0.90"/><path d="M-37.2 76.2L-27.3 64.5L-39.5 64.5L-68.1 76.2L-96.0 96.2L-75.1 96.2z" stroke-width="2.42"/><path d="M-10.6 56.9L-7.5 51.5L-16.2 51.5L-30.9 56.9L-39.5 64.5L-27.3 64.5z" stroke-width="1.59"/><path d="M2.3 47.4L3.3 44.3L-3.4 44.3L-12.8 47.4L-16.2 51.5L-7.5 51.5z" stroke-width="1.18"/><path d="M10.0 41.8L10.1 39.8L4.6 39.8L-2.0 41.8L-3.4 44.3L3.3 44.3z" stroke-width="0.94"/><path d="M15.1 38.2L14.7 36.7L10.1 36.7L5.1 38.2L4.6 39.8L10.1 39.8z" stroke-width="0.90"/><path d="M18.7 35.5L18.1 34.5L14.2 34.5L10.2 35.5L10.1 36.7L14.7 36.7z" stroke-width="0.90"/><path d="M-33.2 96.2L-21.8 76.2L-37.2 76.2L-75.1 96.2L-122.3 138.2L-89.8 138.2z" stroke-width="2.80"/><path d="M-2.8 64.5L-0.5 56.9L-10.6 56.9L-27.3 64.5L-37.2 76.2L-21.8 76.2z" stroke-width="1.92"/><path d="M9.8 51.5L9.9 47.4L2.3 47.4L-7.5 51.5L-10.6 56.9L-0.5 56.9z" stroke-width="1.36"/><path d="M16.6 44.3L16.0 41.8L10.0 41.8L3.3 44.3L2.3 47.4L9.9 47.4z" stroke-width="1.05"/><path d="M20.9 39.8L20.1 38.2L15.1 38.2L10.1 39.8L10.0 41.8L16.0 41.8z" stroke-width="0.90"/><path d="M23.9 36.7L22.9 35.5L18.7 35.5L14.7 36.7L15.1 38.2L20.1 38.2z" stroke-width="0.90"/><path d="M26.1 34.5L25.1 33.6L21.4 33.6L18.1 34.5L18.7 35.5L22.9 35.5z" stroke-width="0.90"/><path d="M9.1 76.2L9.4 64.5L-2.8 64.5L-21.8 76.2L-33.2 96.2L-12.3 96.2z" stroke-width="2.42"/><path d="M19.7 56.9L18.4 51.5L9.8 51.5L-0.5 56.9L-2.8 64.5L9.4 64.5z" stroke-width="1.59"/><path d="M24.9 47.4L23.3 44.3L16.6 44.3L9.9 47.4L9.8 51.5L18.4 51.5z" stroke-width="1.18"/><path d="M28.0 41.8L26.4 39.8L20.9 39.8L16.0 41.8L16.6 44.3L23.3 44.3z" stroke-width="0.94"/><path d="M30.0 38.2L28.5 36.7L23.9 36.7L20.1 38.2L20.9 39.8L26.4 39.8z" stroke-width="0.90"/><path d="M31.5 35.5L30.1 34.5L26.1 34.5L22.9 35.5L23.9 36.7L28.5 36.7z" stroke-width="0.90"/><path d="M29.5 96.2L24.6 76.2L9.1 76.2L-12.3 96.2L-24.9 138.2L7.5 138.2z" stroke-width="2.80"/><path d="M33.9 64.5L29.9 56.9L19.7 56.9L9.4 64.5L9.1 76.2L24.6 76.2z" stroke-width="1.92"/><path d="M35.7 51.5L32.5 47.4L24.9 47.4L18.4 51.5L19.7 56.9L29.9 56.9z" stroke-width="1.36"/><path d="M36.7 44.3L34.0 41.8L28.0 41.8L23.3 44.3L24.9 47.4L32.5 47.4z" stroke-width="1.05"/><path d="M37.3 39.8L35.0 38.2L30.0 38.2L26.4 39.8L28.0 41.8L34.0 41.8z" stroke-width="0.90"/><path d="M37.7 36.7L35.7 35.5L31.5 35.5L28.5 36.7L30.0 38.2L35.0 38.2z" stroke-width="0.90"/><path d="M38.0 34.5L36.3 33.6L32.6 33.6L30.1 34.5L31.5 35.5L35.7 35.5z" stroke-width="0.90"/><path d="M55.4 76.2L46.1 64.5L33.9 64.5L24.6 76.2L29.5 96.2L50.5 96.2z" stroke-width="2.42"/><path d="M50.1 56.9L44.3 51.5L35.7 51.5L29.9 56.9L33.9 64.5L46.1 64.5z" stroke-width="1.59"/><path d="M47.5 47.4L43.3 44.3L36.7 44.3L32.5 47.4L35.7 51.5L44.3 51.5z" stroke-width="1.18"/><path d="M46.0 41.8L42.7 39.8L37.3 39.8L34.0 41.8L36.7 44.3L43.3 44.3z" stroke-width="0.94"/><path d="M45.0 38.2L42.3 36.7L37.7 36.7L35.0 38.2L37.3 39.8L42.7 39.8z" stroke-width="0.90"/><path d="M44.3 35.5L42.0 34.5L38.0 34.5L35.7 35.5L37.7 36.7L42.3 36.7z" stroke-width="0.90"/><path d="M92.3 96.2L70.9 76.2L55.4 76.2L50.5 96.2L72.5 138.2L104.9 138.2z" stroke-width="2.80"/><path d="M70.6 64.5L60.3 56.9L50.1 56.9L46.1 64.5L55.4 76.2L70.9 76.2z" stroke-width="1.92"/><path d="M61.6 51.5L55.1 47.4L47.5 47.4L44.3 51.5L50.1 56.9L60.3 56.9z" stroke-width="1.36"/><path d="M56.7 44.3L52.0 41.8L46.0 41.8L43.3 44.3L47.5 47.4L55.1 47.4z" stroke-width="1.05"/><path d="M53.6 39.8L50.0 38.2L45.0 38.2L42.7 39.8L46.0 41.8L52.0 41.8z" stroke-width="0.90"/><path d="M51.5 36.7L48.5 35.5L44.3 35.5L42.3 36.7L45.0 38.2L50.0 38.2z" stroke-width="0.90"/><path d="M49.9 34.5L47.4 33.6L43.7 33.6L42.0 34.5L44.3 35.5L48.5 35.5z" stroke-width="0.90"/><path d="M101.8 76.2L82.8 64.5L70.6 64.5L70.9 76.2L92.3 96.2L113.2 96.2z" stroke-width="2.42"/><path d="M80.5 56.9L70.2 51.5L61.6 51.5L60.3 56.9L70.6 64.5L82.8 64.5z" stroke-width="1.59"/><path d="M70.1 47.4L63.4 44.3L56.7 44.3L55.1 47.4L61.6 51.5L70.2 51.5z" stroke-width="1.18"/><path d="M64.0 41.8L59.1 39.8L53.6 39.8L52.0 41.8L56.7 44.3L63.4 44.3z" stroke-width="0.94"/><path d="M59.9 38.2L56.1 36.7L51.5 36.7L50.0 38.2L53.6 39.8L59.1 39.8z" stroke-width="0.90"/><path d="M57.1 35.5L53.9 34.5L49.9 34.5L48.5 35.5L51.5 36.7L56.1 36.7z" stroke-width="0.90"/><path d="M155.1 96.2L117.2 76.2L101.8 76.2L113.2 96.2L169.8 138.2L202.3 138.2z" stroke-width="2.80"/><path d="M107.3 64.5L90.6 56.9L80.5 56.9L82.8 64.5L101.8 76.2L117.2 76.2z" stroke-width="1.92"/><path d="M87.5 51.5L77.7 47.4L70.1 47.4L70.2 51.5L80.5 56.9L90.6 56.9z" stroke-width="1.36"/><path d="M76.7 44.3L70.0 41.8L64.0 41.8L63.4 44.3L70.1 47.4L77.7 47.4z" stroke-width="1.05"/><path d="M69.9 39.8L64.9 38.2L59.9 38.2L59.1 39.8L64.0 41.8L70.0 41.8z" stroke-width="0.90"/><path d="M65.3 36.7L61.3 35.5L57.1 35.5L56.1 36.7L59.9 38.2L64.9 38.2z" stroke-width="0.90"/><path d="M61.9 34.5L58.6 33.6L54.9 33.6L53.9 34.5L57.1 35.5L61.3 35.5z" stroke-width="0.90"/><path d="M148.1 76.2L119.5 64.5L107.3 64.5L117.2 76.2L155.1 96.2L176.0 96.2z" stroke-width="2.42"/><path d="M110.9 56.9L96.2 51.5L87.5 51.5L90.6 56.9L107.3 64.5L119.5 64.5z" stroke-width="1.59"/><path d="M92.8 47.4L83.4 44.3L76.7 44.3L77.7 47.4L87.5 51.5L96.2 51.5z" stroke-width="1.18"/><path d="M82.0 41.8L75.4 39.8L69.9 39.8L70.0 41.8L76.7 44.3L83.4 44.3z" stroke-width="0.94"/><path d="M74.9 38.2L69.9 36.7L65.3 36.7L64.9 38.2L69.9 39.8L75.4 39.8z" stroke-width="0.90"/><path d="M69.8 35.5L65.8 34.5L61.9 34.5L61.3 35.5L65.3 36.7L69.9 36.7z" stroke-width="0.90"/><path d="M144.0 64.5L121.0 56.9L110.9 56.9L119.5 64.5L148.1 76.2L163.5 76.2z" stroke-width="1.92"/><path d="M113.5 51.5L100.3 47.4L92.8 47.4L96.2 51.5L110.9 56.9L121.0 56.9z" stroke-width="1.36"/><path d="M96.8 44.3L88.0 41.8L82.0 41.8L83.4 44.3L92.8 47.4L100.3 47.4z" stroke-width="1.05"/><path d="M86.3 39.8L79.9 38.2L74.9 38.2L75.4 39.8L82.0 41.8L88.0 41.8z" stroke-width="0.90"/><path d="M79.1 36.7L74.1 35.5L69.8 35.5L69.9 36.7L74.9 38.2L79.9 38.2z" stroke-width="0.90"/><path d="M73.8 34.5L69.8 33.6L66.1 33.6L65.8 34.5L69.8 35.5L74.1 35.5z" stroke-width="0.90"/><path d="M141.3 56.9L122.1 51.5L113.5 51.5L121.0 56.9L144.0 64.5L156.2 64.5z" stroke-width="1.59"/><path d="M115.4 47.4L103.5 44.3L96.8 44.3L100.3 47.4L113.5 51.5L122.1 51.5z" stroke-width="1.18"/><path d="M100.0 41.8L91.7 39.8L86.3 39.8L88.0 41.8L96.8 44.3L103.5 44.3z" stroke-width="0.94"/><path d="M89.8 38.2L83.7 36.7L79.1 36.7L79.9 38.2L86.3 39.8L91.7 39.8z" stroke-width="0.90"/><path d="M82.6 35.5L77.8 34.5L73.8 34.5L74.1 35.5L79.1 36.7L83.7 36.7z" stroke-width="0.90"/><path d="M139.4 51.5L122.9 47.4L115.4 47.4L122.1 51.5L141.3 56.9L151.4 56.9z" stroke-width="1.36"/><path d="M116.8 44.3L106.0 41.8L100.0 41.8L103.5 44.3L115.4 47.4L122.9 47.4z" stroke-width="1.05"/><path d="M102.6 39.8L94.8 38.2L89.8 38.2L91.7 39.8L100.0 41.8L106.0 41.8z" stroke-width="0.90"/><path d="M92.8 36.7L86.9 35.5L82.6 35.5L83.7 36.7L89.8 38.2L94.8 38.2z" stroke-width="0.90"/><path d="M85.7 34.5L81.0 33.6L77.2 33.6L77.8 34.5L82.6 35.5L86.9 35.5z" stroke-width="0.90"/><path d="M138.0 47.4L123.5 44.3L116.8 44.3L122.9 47.4L139.4 51.5L148.0 51.5z" stroke-width="1.18"/><path d="M118.0 41.8L108.1 39.8L102.6 39.8L106.0 41.8L116.8 44.3L123.5 44.3z" stroke-width="0.94"/><path d="M104.8 38.2L97.4 36.7L92.8 36.7L94.8 38.2L102.6 39.8L108.1 39.8z" stroke-width="0.90"/><path d="M95.4 35.5L89.7 34.5L85.7 34.5L86.9 35.5L92.8 36.7L97.4 36.7z" stroke-width="0.90"/><path d="M136.9 44.3L124.0 41.8L118.0 41.8L123.5 44.3L138.0 47.4L145.5 47.4z" stroke-width="1.05"/><path d="M119.0 39.8L109.8 38.2L104.8 38.2L108.1 39.8L118.0 41.8L124.0 41.8z" stroke-width="0.90"/><path d="M106.6 36.7L99.7 35.5L95.4 35.5L97.4 36.7L104.8 38.2L109.8 38.2z" stroke-width="0.90"/><path d="M97.6 34.5L92.1 33.6L88.4 33.6L89.7 34.5L95.4 35.5L99.7 35.5z" stroke-width="0.90"/></g></g>
<linearGradient id="g_te3" x1="0" y1="0" x2="1" y2="0"><stop offset=".45" stop-color="#0a1050" stop-opacity="0"/><stop offset="1" stop-color="#0a1050" stop-opacity=".75"/></linearGradient><rect width="85" height="85" fill="url(#g_te3)"/>
<g filter="url(#b1)"><path d="M22 44L34 47L40 53L52 57" stroke="#fff" stroke-width="1.600" fill="none"/><path d="M36 41L50 46L64 53" stroke="#f0f0c0" stroke-width="1.100" fill="none" opacity=".8"/></g></svg><div class="lb"><span>Techno</span></div></div>
<div class="th" style="left:2.0px;top:279.5px"><svg viewBox="0 0 85 85" preserveAspectRatio="none"><linearGradient id="g_tr" x1="0" y1="0" x2="0" y2="1"><stop offset="0" stop-color="#1260d8"/><stop offset=".35" stop-color="#1a6ce0"/><stop offset=".55" stop-color="#4a90e8"/><stop offset=".7" stop-color="#6aa8ec"/></linearGradient><rect width="85" height="85" fill="url(#g_tr)"/>
<g filter="url(#warp2)"><g filter="url(#b1)"><path d="M18 0L64 0C66 5 60 9 52 10C47 13 44 17 42 22C44 27 48 30 50 34C56 36 62 40 66 44L30 48C34 42 36 36 33 30C28 24 24 18 25 12C20 9 17 5 18 0z" fill="#f6f9fd"/><path d="M28 8C34 6 40 10 38 16C34 20 36 26 40 30L36 32C30 26 26 16 28 8z" fill="#c8d6ec"/>
<path d="M0 42C6 38 14 38 22 42C28 36 38 30 50 36C58 40 62 36 68 32C74 28 82 30 85 32L85 60L0 60z" fill="#ffffff"/><path d="M0 52L30 50L60 53L85 50L85 60L0 60z" fill="#c4d4ea"/><ellipse cx="44" cy="46" rx="9" ry="3" fill="#aec4e4"/><ellipse cx="12" cy="48" rx="9" ry="2.500" fill="#b8cce8"/><ellipse cx="72" cy="26" rx="9" ry="1.500" fill="#7cb0f0"/><ellipse cx="76" cy="42" rx="7" ry="3" fill="#d4e0f0"/></g></g>
<rect x="0" y="0" width="17" height="2.500" fill="#0c1420"/><rect x="62" y="0" width="23" height="3.500" fill="#0c1420"/>
<rect x="0" y="58" width="85" height="27" fill="#13223a"/><rect x="0" y="58" width="85" height="2.200" fill="#34506e"/>
<g fill="#6c8aa8" filter="url(#b05)"><rect x="0" y="65" width="24" height="3.500"/><rect x="28" y="65" width="30" height="3.500"/><rect x="62" y="65" width="12" height="3"/><rect x="0" y="71" width="24" height="3"/><rect x="28" y="71" width="30" height="3"/><rect x="62" y="71" width="10" height="2.500"/><rect x="0" y="77" width="22" height="3"/><rect x="28" y="77" width="30" height="3"/></g><rect x="24" y="60" width="4" height="25" fill="#13223a"/><rect x="58" y="60" width="4" height="25" fill="#13223a"/><path d="M62 85L85 66L85 85z" fill="#0c1828"/></svg><div class="lb"><span>Terrace</span></div></div>
<div class="th" style="left:90.6px;top:279.5px"><svg viewBox="0 0 85 85" preserveAspectRatio="none"><linearGradient id="g_wi" x1="0" y1="0" x2="1" y2="0"><stop offset="0" stop-color="#122c42"/><stop offset=".35" stop-color="#16222e"/><stop offset=".6" stop-color="#241c18"/><stop offset="1" stop-color="#5a300e"/></linearGradient><rect width="85" height="85" fill="url(#g_wi)"/>
<g filter="url(#b2)"><ellipse cx="10" cy="8" rx="10" ry="8" fill="#2c6c98"/><ellipse cx="10" cy="40" rx="12" ry="16" fill="#18324a"/><path d="M66 14L82 18L85 58L62 58z" fill="#6a3a10"/><ellipse cx="74" cy="44" rx="5" ry="13" fill="#94541a"/><rect x="50" y="0" width="35" height="12" fill="#1c1410"/><rect x="0" y="58" width="85" height="27" fill="#141618"/></g>
<g filter="url(#b1)"><path d="M2 0L14 20L22 40L26 58" stroke="#0c1820" stroke-width="2" fill="none"/><path d="M18 0L24 24" stroke="#0c1820" stroke-width="1.500" fill="none"/>
<path d="M30 22C36 18 46 18 54 22C60 28 62 44 60 62L28 62C26 48 26 32 30 22z" fill="#2a2e34"/><path d="M34 26L48 24L52 44L36 48z" fill="#454b54"/><ellipse cx="38.500" cy="15" rx="5" ry="6.500" fill="#8c7c70"/><path d="M33 12C35 7 43 7 45 12L44 9C42 6 36 6 33 12z" fill="#c8c8c4"/></g></svg><div class="lb"><span>The Witcher 3: Wild Hunt<br>Main Menu巫师3本体主…</span></div></div>
<div class="th" style="left:179.2px;top:279.5px"><svg viewBox="0 0 85 85" preserveAspectRatio="none"><linearGradient id="g_sp" x1="0" y1="0" x2="0" y2="1"><stop offset="0" stop-color="#343434"/><stop offset=".5" stop-color="#4a4a4a"/><stop offset=".68" stop-color="#3a3a3a"/><stop offset=".75" stop-color="#2c2c2c"/><stop offset="1" stop-color="#222"/></linearGradient><rect width="85" height="85" fill="url(#g_sp)"/>
<filter id="smoke" x="-10%" y="-10%" width="120%" height="120%" color-interpolation-filters="sRGB"><feGaussianBlur in="SourceGraphic" stdDeviation="2.500" result="s"/><feTurbulence type="fractalNoise" baseFrequency=".13" numOctaves="4" seed="5"/><feColorMatrix values="0 0 0 0 1  0 0 0 0 1  0 0 0 0 1  4.200 0 0 0 -1.850" result="n"/><feComposite in="n" in2="s" operator="arithmetic" k1="1.100" k2="0" k3="0" k4="0"/></filter>
<g filter="url(#smoke)" fill="#fff"><path d="M4 4L28 0L50 4L60 12L58 24L52 34L56 44L46 54L38 60L30 72L44 80L30 85L16 78L14 66L8 58L12 48L22 40L12 30L10 18z"/><ellipse cx="28" cy="52" rx="14" ry="8"/><ellipse cx="28" cy="53" rx="10" ry="6"/><ellipse cx="40" cy="30" rx="12" ry="10"/></g>
<ellipse cx="27" cy="53" rx="10" ry="4.500" fill="#fff" opacity=".45" filter="url(#b2)"/>
<rect x="64.500" y="0" width="20.500" height="52.500" fill="#161616"/><g fill="#2c8cd0"><rect x="73" y="5" width="5" height="1.500"/><rect x="73" y="8.500" width="2.500" height="4.500"/><rect x="73" y="14" width="6" height="1.500"/><rect x="73" y="20.500" width="4" height="1.500"/><rect x="73" y="38" width="3" height="4"/><rect x="73" y="46" width="3" height="4.500"/></g><g fill="#e8e8e8"><rect x="73" y="2.500" width="4" height="1.300"/><rect x="73" y="24" width="11.500" height="2"/><rect x="73" y="27.500" width="11.500" height="2"/><rect x="73" y="43" width="5" height="1.300"/></g><g fill="#4a4a4a"><rect x="66" y="2.500" width="5" height="1"/><rect x="66" y="5.500" width="4" height="1"/><rect x="66" y="9" width="5" height="1"/><rect x="66" y="14" width="4" height="1"/><rect x="66" y="21" width="5" height="1"/><rect x="66" y="25" width="5" height="1"/><rect x="66" y="28" width="4" height="1"/><rect x="66" y="36" width="5" height="1"/><rect x="66" y="40" width="4" height="1"/><rect x="66" y="44" width="5" height="1"/><rect x="66" y="48" width="4" height="1"/></g><rect x="64.500" y="17.500" width="20.500" height=".8" fill="#3a3a3a"/><rect x="64.500" y="32.500" width="20.500" height=".8" fill="#3a3a3a"/></svg><div class="lb"><span>The-Spirit</span></div></div>
<div class="th" style="left:267.8px;top:279.5px"><svg viewBox="0 0 85 85" preserveAspectRatio="none"><linearGradient id="g_tl" x1="0" y1="0" x2="0" y2="1"><stop offset="0" stop-color="#16283e"/><stop offset=".55" stop-color="#22364e"/><stop offset=".8" stop-color="#2c4058"/><stop offset="1" stop-color="#283848"/></linearGradient><rect width="85" height="85" fill="url(#g_tl)"/>
<text transform="scale(.72 1)" y="40" x="0.600 18.600 32.800 47.800 65.800 79.400 92.200 110.300" font-family="Liberation Mono,monospace" font-size="29.500" fill="#5aaac2" filter="url(#b05)">22:27:48</text>
<g filter="url(#b1)"><path d="M0 85L0 78L8 74L14 78L22 72L30 80L40 76L50 80L58 70L64 66L70 60L76 56L80 52L85 50L85 85z" fill="#0e1720"/></g></svg><div class="lb"><span>Time lapse</span></div></div>
<div class="th" style="left:356.4px;top:279.5px"><svg viewBox="0 0 85 85" preserveAspectRatio="none"><linearGradient id="g_un" x1="0" y1="0" x2="0" y2="1"><stop offset="0" stop-color="#4c88d4"/><stop offset=".3" stop-color="#78a8e0"/><stop offset=".45" stop-color="#b4cce8"/><stop offset=".58" stop-color="#e4e8ec"/><stop offset=".66" stop-color="#8a7c68"/><stop offset="1" stop-color="#6a5a44"/></linearGradient><rect width="85" height="85" fill="url(#g_un)"/>
<filter id="leaf" x="-10%" y="-10%" width="120%" height="120%" color-interpolation-filters="sRGB"><feTurbulence type="fractalNoise" baseFrequency=".13" numOctaves="2" seed="7"/><feColorMatrix values="1.900 0 0 0 -.2  1.150 0 0 0 -.25  .2 0 0 0 -.03  0 0 0 0 1"/><feComposite in2="SourceGraphic" operator="in"/><feGaussianBlur stdDeviation=".7"/></filter>
<g filter="url(#b2)"><ellipse cx="68" cy="50" rx="20" ry="8" fill="#f4f4f4"/><ellipse cx="60" cy="42" rx="10" ry="3" fill="#d4e0f0"/><ellipse cx="40" cy="62" rx="16" ry="8" fill="#3c3628"/><ellipse cx="10" cy="70" rx="14" ry="14" fill="#2a2016"/><ellipse cx="74" cy="76" rx="16" ry="9" fill="#94846a"/></g>
<path d="M0 0L80 0C74 6 68 10 62 12C56 16 52 18 54 26C58 32 52 38 48 42C46 48 44 54 36 58L0 60z" fill="#5a3010" filter="url(#b2)"/>
<path d="M0 0L78 0C72 6 66 9 60 11C54 15 50 18 52 26C56 32 50 38 46 42C44 48 42 52 34 57L0 58z" fill="#c85c18" filter="url(#leaf)"/>
<g filter="url(#b1)"><path d="M62 10C66 6 72 6 74 10C72 14 76 18 74 21C70 24 64 26 62 22C60 18 64 14 62 10z" fill="#e87030"/><ellipse cx="82" cy="8" rx="3" ry="4" fill="#d86428"/><ellipse cx="44" cy="24" rx="5" ry="4" fill="#f08c30"/><ellipse cx="36" cy="47" rx="5" ry="4" fill="#f07c30"/><ellipse cx="30" cy="14" rx="6" ry="4" fill="#e87828"/><ellipse cx="8" cy="42" rx="5" ry="4" fill="#f09030"/></g>
<radialGradient id="g_un2" cx=".7" cy=".6" r=".9"><stop offset=".6" stop-color="#1c1006" stop-opacity="0"/><stop offset="1" stop-color="#1c1006" stop-opacity=".8"/></radialGradient><rect width="85" height="85" fill="url(#g_un2)"/></svg><div class="lb"><span>UNRAVEL 60fps</span></div></div>
<div class="th" style="left:445.0px;top:279.5px"><svg viewBox="0 0 85 85" preserveAspectRatio="none"><rect width="85" height="85" fill="#0a1226"/>
<g filter="url(#warp)"><g filter="url(#b1)" fill="none"><path d="M2 14C20 2 50 0 78 8" stroke="#c82c2c" stroke-width="5"/><path d="M26 14C46 8 68 14 78 30" stroke="#94242e" stroke-width="4"/><path d="M44 4C62 4 80 12 86 30" stroke="#e03838" stroke-width="3"/><path d="M80 18C88 40 84 62 70 78" stroke="#b42424" stroke-width="7"/><path d="M70 40C72 56 62 70 48 76" stroke="#a02c34" stroke-width="5"/><path d="M80 52C76 68 62 82 44 86" stroke="#c83030" stroke-width="5"/><path d="M60 82C40 90 16 82 4 66" stroke="#7c2030" stroke-width="4"/><path d="M20 20C10 30 6 50 14 64" stroke="#1c3c64" stroke-width="6"/><path d="M14 8C22 4 30 4 36 6" stroke="#e84040" stroke-width="2"/>
<circle cx="42" cy="46" r="19" stroke="#2c8ca0" stroke-width="4"/><path d="M24 40C28 28 44 22 56 30" stroke="#c468a8" stroke-width="3"/><path d="M60 34C66 46 62 60 50 66" stroke="#3cb4c4" stroke-width="3"/><path d="M24 60C32 72 50 74 60 64" stroke="#2c9c7c" stroke-width="4"/><path d="M30 26C22 34 22 50 28 58" stroke="#284c84" stroke-width="3"/>
<path d="M8 20L20 12L16 24z" fill="#3cb4c4" stroke="none"/><path d="M1 46L7 40L6 48z" fill="#3cb4c4" stroke="none"/><path d="M62 12L70 8L68 18z" fill="#3cb4c4" stroke="none"/><path d="M22 34L28 28L27 38z" fill="#2c8cb0" stroke="none"/><circle cx="79" cy="56" r="2.500" fill="#ff6030" stroke="none"/></g></g>
<circle cx="42" cy="47" r="13" fill="#070a1c" filter="url(#b1)"/></svg><div class="lb"><span>WRMMM</span></div></div>
<div class="th" style="left:2.0px;top:368.2px"><svg viewBox="0 0 85 85" preserveAspectRatio="none"><rect width="85" height="85" fill="#f6f6f6"/>
<g filter="url(#b2)"><path d="M0 14L8 22L16 34L18 40L6 44L0 40z" fill="#8a8282"/><path d="M6 44C10 32 26 26 36 32C42 36 42 46 40 58L4 58z" fill="#3c3a3c"/><ellipse cx="24" cy="32" rx="10" ry="5" fill="#9c9898"/><path d="M57 22C58 12 76 10 78 22C80 32 78 40 80 58L56 58C58 46 56 32 57 22z" fill="#5c6464"/><ellipse cx="67" cy="30" rx="6" ry="9" fill="#343c3c"/><rect x="0" y="50" width="85" height="10" fill="#262a2a"/><rect x="80" y="14" width="5" height="40" fill="#d8d8d8"/></g>
<g filter="url(#b1)"><path d="M19 10C22 8 28 9 30 12C31 15 28 18 24 18C20 18 18 14 19 10z" fill="#6c5c5a"/><g stroke="#6a5a58" stroke-width="1.800" fill="none" stroke-linecap="round"><path d="M21 10L19 1M24 9L24.500 0M27 10L30 1M29 12L33 5M20 14L16 12"/></g><path d="M18 18L22 17L14 34L8 30z" fill="#8a807e"/>
<path d="M40 36C44 32 52 34 53 40L54 56L42 56z" fill="#2a2428"/><g stroke="#2a2428" stroke-width="1.800" fill="none" stroke-linecap="round"><path d="M42 38L40 32M45 36L44 30M48 36L49 30M51 38L53 33"/></g></g></svg></div>
<div class="th" style="left:90.6px;top:368.2px"><svg viewBox="0 0 85 85" preserveAspectRatio="none"><rect width="85" height="85" fill="#32201c"/>
<g filter="url(#b2)"><rect x="0" y="0" width="36" height="40" fill="#3e2420"/><ellipse cx="12" cy="24" rx="5" ry="16" fill="#5c4a48"/><path d="M30 0L66 0C68 20 68 40 66 58L26 58C28 40 28 20 30 0z" fill="#361612"/><path d="M40 2L57 2C59 12 58 24 52 32L44 32C38 24 38 12 40 2z" fill="#8a8a80"/><ellipse cx="50" cy="8" rx="7" ry="5" fill="#b4b0a4"/><path d="M56 0L66 0L66 40L60 30z" fill="#2a1210"/><rect x="67.500" y="0" width="17.500" height="58" fill="#9c988e"/><ellipse cx="81" cy="28" rx="5" ry="12" fill="#c4c4bc"/><ellipse cx="12" cy="50" rx="12" ry="9" fill="#6a2a20"/><ellipse cx="40" cy="52" rx="10" ry="7" fill="#6c2c24"/><ellipse cx="26" cy="44" rx="6" ry="10" fill="#2a1410"/></g>
<g filter="url(#b05)"><ellipse cx="44" cy="23" rx="4.500" ry="1.400" fill="#a82420"/><circle cx="80" cy="24" r="1.500" fill="#2a2a2a"/><ellipse cx="82" cy="35" rx="2" ry="1" fill="#8a2a24"/></g></svg></div>
<div class="th" style="left:179.2px;top:368.2px"><svg viewBox="0 0 85 85" preserveAspectRatio="none"><linearGradient id="g_zn" x1="0" y1="0" x2="0" y2="1"><stop offset="0" stop-color="#0e1c32"/><stop offset=".3" stop-color="#1a2c44"/><stop offset=".42" stop-color="#32343e"/><stop offset=".55" stop-color="#4a3c34"/><stop offset=".62" stop-color="#7a5434"/><stop offset=".655" stop-color="#14100c"/></linearGradient><rect width="85" height="85" fill="url(#g_zn)"/>
<g filter="url(#b2)"><path d="M50 0L66 0L72 18L78 38L64 40L58 20z" fill="#5c6c8c" opacity=".85"/><path d="M56 0L62 0L68 20L72 36L68 36L62 18z" fill="#8c9cb8" opacity=".7"/><ellipse cx="36" cy="53" rx="18" ry="2.500" fill="#f09838"/><ellipse cx="35" cy="53.500" rx="8" ry="1.400" fill="#ffe0a0"/><ellipse cx="16" cy="42" rx="18" ry="3" fill="#262c3a"/><ellipse cx="70" cy="46" rx="16" ry="3" fill="#3a343a"/></g>
<rect x="0" y="55.500" width="85" height="30" fill="#0c0a08"/>
<g fill="#e4ecfa"><circle cx="54" cy="6" r=".7"/><circle cx="59" cy="16" r=".7"/><circle cx="62" cy="20" r=".6"/><circle cx="56" cy="1.500" r=".5"/><circle cx="66" cy="30" r=".6"/><circle cx="70" cy="36" r=".5"/><circle cx="44" cy="10" r=".4"/><circle cx="30" cy="16" r=".4"/><circle cx="12" cy="12" r=".4"/><circle cx="3" cy="19" r=".5"/><circle cx="76" cy="8" r=".4"/><circle cx="48" cy="22" r=".4"/><circle cx="5" cy="46" r=".5"/><circle cx="80" cy="22" r=".4"/></g></svg></div>
<div class="th" style="left:267.8px;top:368.2px"><svg viewBox="0 0 85 85" preserveAspectRatio="none"><linearGradient id="g_zs" x1="0" y1="0" x2="1" y2="0"><stop offset="0" stop-color="#e8b080"/><stop offset=".45" stop-color="#f4c888"/><stop offset=".75" stop-color="#f8e0a8"/><stop offset="1" stop-color="#d4c4a4"/></linearGradient><rect width="85" height="85" fill="url(#g_zs)"/>
<g filter="url(#b2)"><path d="M68 0L85 0L85 18L76 14z" fill="#b8b8b0"/><ellipse cx="32" cy="3" rx="12" ry="4" fill="#c07848"/><ellipse cx="63" cy="27" rx="18" ry="11" fill="#fff0b8"/><ellipse cx="14" cy="30" rx="15" ry="7" fill="#9a7068"/><ellipse cx="6" cy="22" rx="6" ry="4" fill="#a07c74"/><ellipse cx="22" cy="23" rx="3.500" ry="2.500" fill="#8c6c68"/><ellipse cx="34" cy="33" rx="13" ry="3.500" fill="#c08860"/><ellipse cx="30" cy="42" rx="30" ry="3.500" fill="#e8a050"/><ellipse cx="16" cy="52" rx="18" ry="4" fill="#b07860"/><ellipse cx="78" cy="44" rx="9" ry="9" fill="#c8a088"/><ellipse cx="60" cy="54" rx="14" ry="4" fill="#fcd878"/><ellipse cx="56" cy="42" rx="14" ry="3" fill="#f0b050"/></g>
<ellipse cx="63" cy="27" rx="8" ry="6" fill="#fff" filter="url(#b2)"/><g stroke="#fff8d8" stroke-width="2.500" opacity=".45" filter="url(#b1)"><path d="M63 27L40 0M63 27L60 0M63 27L80 0M63 27L85 20M63 27L30 16"/></g></svg></div>
<div class="th" style="left:356.4px;top:368.2px"><svg viewBox="0 0 85 85" preserveAspectRatio="none"><rect width="85" height="85" fill="#010102"/>
<radialGradient id="g_ze" cx=".22" cy=".5" r=".8"><stop offset="0" stop-color="#4470c0"/><stop offset=".25" stop-color="#23448e"/><stop offset=".5" stop-color="#122454"/><stop offset=".8" stop-color="#070c26"/><stop offset="1" stop-color="#030514"/></radialGradient>
<circle cx="41.500" cy="42" r="28.500" fill="url(#g_ze)"/><g filter="url(#b1)"><path d="M16 40C20 30 28 24 34 22" stroke="#c4d8f4" stroke-width="3" fill="none" opacity=".3"/><ellipse cx="24" cy="44" rx="6" ry="10" fill="#a4c0ec" opacity=".35"/><path d="M36 22C44 18 54 22 54 28C50 32 48 36 52 42C56 46 56 52 52 54C48 50 44 44 42 38C38 32 34 28 36 22z" fill="#0c1226"/><ellipse cx="47" cy="24" rx="6" ry="2" fill="#d8b880" opacity=".55"/><ellipse cx="54" cy="38" rx="2" ry="3" fill="#d8b880" opacity=".5"/></g>
<path d="M14 50C18 58 24 64 32 68" stroke="#9cc0f8" stroke-width="1.200" fill="none" opacity=".8" filter="url(#b05)"/></svg></div>
<div class="th" style="left:445.0px;top:368.2px"><svg viewBox="0 0 85 85" preserveAspectRatio="none"><radialGradient id="g_zd" cx=".8" cy=".35" r=".9"><stop offset="0" stop-color="#dcd058"/><stop offset=".5" stop-color="#bca830"/><stop offset="1" stop-color="#6c5c18"/></radialGradient><rect width="85" height="85" fill="url(#g_zd)"/>
<g filter="url(#warp2)"><g filter="url(#b1)"><path d="M50 1L52 6L58 6L59 16L56 24L60 30L70 34L76 28L78 38L72 46L58 48L50 58L2 58L0 30L10 22L26 16L40 14L44 4z" fill="#342a1a"/><path d="M8 30L30 22L44 30L40 46L30 56L10 56z" fill="#4a3c28"/><path d="M50 30L64 36L70 32L72 44L58 46z" fill="#54442c"/><path d="M24 36L34 28L32 36L24 42z" fill="#e83810"/><ellipse cx="42" cy="15.500" rx="1.800" ry="3" fill="#ff4818" transform="rotate(20 42 15.500)"/><circle cx="8" cy="50" r="2" fill="#c84818"/><ellipse cx="20" cy="50" rx="3" ry="4" fill="#d8c060" opacity=".7"/><ellipse cx="4" cy="12" rx="10" ry="10" fill="#5c4c14"/></g></g></svg></div>
</div>
<!--/GRID-->
<!--PANEL-->
<!-- scrollbar -->
<div style="left:553px;top:74px;width:7px;height:425px;border:1px solid #4f7d9c;background:#f6f6f6"></div>
<div style="left:553px;top:281px;width:7px;height:168px;background:#0f7bd0"></div>
<!-- preview -->
<svg style="left:580px;top:19px" width="173" height="173" viewBox="0 0 173 173">
<linearGradient id="pv1" x1="0" y1="0" x2=".3" y2="1"><stop offset="0" stop-color="#04051a"/><stop offset=".35" stop-color="#070a2c"/><stop offset=".7" stop-color="#0b1850"/><stop offset="1" stop-color="#0a1544"/></linearGradient>
<filter id="dust" x="-10%" y="-10%" width="120%" height="120%" color-interpolation-filters="sRGB"><feTurbulence type="fractalNoise" baseFrequency=".09" numOctaves="3" seed="4" result="n"/><feDisplacementMap in="SourceGraphic" in2="n" scale="16" xChannelSelector="R" yChannelSelector="G"/><feGaussianBlur stdDeviation="1.200"/></filter>
<filter id="grain"><feTurbulence type="fractalNoise" baseFrequency=".8" numOctaves="2" seed="9"/><feColorMatrix values="0 0 0 0 .62  0 0 0 0 .74  0 0 0 0 1  0 0 0 2.600 -1.500"/><feComposite in2="SourceGraphic" operator="in"/></filter>
<rect width="173" height="173" fill="url(#pv1)"/>
<g filter="url(#dust)">
<g transform="translate(92 77) rotate(-18)">
<ellipse rx="118" ry="34" fill="#1c3ca0" opacity=".55" filter="url(#b6)"/>
<ellipse rx="100" ry="25" fill="#3458c4" opacity=".75" filter="url(#b3)"/>
<ellipse rx="84" ry="19" fill="none" stroke="#86a8f4" stroke-width="7" opacity=".8" filter="url(#b3)"/>
<ellipse rx="60" ry="15" fill="#5c50c4" opacity=".9" filter="url(#b3)"/>
<ellipse rx="45" ry="10.500" fill="#9068dc" filter="url(#b2)"/>
<ellipse rx="31" ry="7" fill="#e4ccf8" filter="url(#b2)"/>
</g>
<ellipse cx="36" cy="122" rx="50" ry="12" fill="#2c50b0" opacity=".5" filter="url(#b3)"/>
<ellipse cx="72" cy="150" rx="30" ry="14" fill="#1c3c90" opacity=".45" filter="url(#b3)"/>
<ellipse cx="150" cy="140" rx="12" ry="14" fill="#1c3890" opacity=".4" filter="url(#b3)"/>
</g>
<g transform="translate(93 72) rotate(-18)"><ellipse rx="21" ry="4.500" fill="#fff" filter="url(#b2)"/></g>
<g transform="translate(90 82) rotate(-18)"><ellipse rx="100" ry="32" fill="#fff" filter="url(#grain)" opacity=".5"/></g>
<ellipse cx="70" cy="145" rx="70" ry="26" fill="#fff" filter="url(#grain)" opacity=".3"/>
<g fill="#cfe0ff"><circle cx="48" cy="20" r=".7"/><circle cx="114" cy="11" r=".6"/><circle cx="83" cy="32" r=".5"/><circle cx="160" cy="2" r=".6"/><circle cx="103" cy="160" r=".6"/></g>
</svg>
<!-- info -->
<div class="t" style="left:574px;top:198.500px;font-size:8.100px;color:#9a9a9a">Название:</div>
<div class="t" style="left:648px;top:198.500px;font-size:8.150px;color:#333">4k Galaxy Spiral with music</div>
<div class="t" style="left:574px;top:215.500px;font-size:8.100px;color:#9a9a9a">Тип:</div>
<div class="t" style="left:648px;top:215.500px;font-size:8.150px;color:#333">Video</div>
<div class="t" style="left:574px;top:239px;font-size:9.330px;color:#333">Свойства</div>
<div style="left:621px;top:243px;width:125px;height:1px;background:#c4c4c4"></div>
<svg style="left:751px;top:240px" width="10" height="6" viewBox="0 0 10 6"><path d="M0 0h10L5 6z" fill="#0f7bd0"/></svg>
<div class="t" style="left:574px;top:264px;font-size:9.330px;color:#333">Цветовая схема</div>
<div style="left:729px;top:259px;width:31px;height:18px;background:#cfcfcf"></div>
<div style="left:732px;top:262px;width:16px;height:12px;background:#000"></div>
<svg style="left:752px;top:266px" width="5" height="4" viewBox="0 0 5 4"><path d="M0 0h5L2.500 4z" fill="#222"/></svg>
<!-- volume -->
<svg style="left:574px;top:291px" width="9" height="8" viewBox="0 0 9 8"><path d="M0 2.500h2L4.500 0v8L2 5.500H0z" fill="#222"/><path d="M5.800 2.200a2.500 2.500 0 0 1 0 3.600M7 1a4.200 4.200 0 0 1 0 6" stroke="#222" stroke-width=".9" fill="none"/></svg>
<div class="t" style="left:589px;top:291px;font-size:9.330px;color:#333">Громкость</div>
<div style="left:671px;top:294px;width:67px;height:2px;background:#c8c8c8"></div>
<div style="left:701px;top:287px;width:5px;height:16px;background:#0f7bd0"></div>
<div class="t" style="left:740px;top:291px;width:20px;text-align:right;font-size:9.330px;color:#333">50</div>
<!-- align -->
<svg style="left:574px;top:318px" width="10" height="8" viewBox="0 0 10 8"><rect x=".5" y=".5" width="9" height="7" fill="#fff" stroke="#222"/><path d="M1.500 6.500L4 3.500L5.500 5L7 4L8.500 6.500z" fill="#222"/><circle cx="3" cy="2.500" r=".8" fill="#222"/></svg>
<div class="t" style="left:590px;top:317.500px;font-size:9.330px;color:#333">Выравнивание</div>
<div style="left:671px;top:313px;width:89px;height:17px;background:#cfcfcf"></div>
<div class="t" style="left:676px;top:317.500px;font-size:8.700px;color:#222">Заполнить</div>
<svg style="left:751px;top:320px" width="5" height="3" viewBox="0 0 5 3"><path d="M0 0h5L2.500 3z" fill="#222"/></svg>
<!-- position -->
<svg style="left:574px;top:346px" width="9" height="5" viewBox="0 0 9 5"><path d="M0 2.500L2.500 0v5zM9 2.500L6.500 0v5zM2 2h5v1H2z" fill="#222"/></svg>
<div class="t" style="left:589px;top:344px;font-size:9.330px;color:#333">Позиция</div>
<div style="left:671px;top:348px;width:67px;height:2px;background:#c8c8c8"></div>
<div style="left:701px;top:340px;width:5px;height:16px;background:#0f7bd0"></div>
<div class="t" style="left:740px;top:344px;width:20px;text-align:right;font-size:9.330px;color:#333">50</div>
<!-- speed -->
<svg style="left:574px;top:364px" width="7" height="8" viewBox="0 0 7 8"><path d="M0 0L7 4L0 8z" fill="#222"/></svg>
<div class="t" style="left:587px;top:364px;font-size:9.330px;color:#333">Скорость</div>
<div class="t" style="left:574px;top:377px;font-size:9.330px;color:#333">воспроизведения</div>
<div style="left:693px;top:368px;width:67px;height:2px;background:#c8c8c8"></div>
<div style="left:724px;top:361px;width:5px;height:16px;background:#0f7bd0"></div>
<div class="t" style="left:730px;top:377px;width:30px;text-align:right;font-size:9.330px;color:#333">100</div>
<!--/PANEL-->
<!--BOTTOM-->
<div style="left:18.500px;top:519px;width:98.500px;height:17px;background:#0f7bd0"></div>
<svg style="left:36px;top:523px" width="9" height="9" viewBox="0 0 16 16"><path d="M15 3.500a4 4 0 0 1-5.600 3.700L3.600 13a1.600 1.600 0 0 1-2.300-2.300l5.800-5.800A4 4 0 0 1 12.500.6L10 3l.7 2.300L13 6l2.200-2.500z" fill="#fff"/></svg>
<div class="t" style="left:47px;top:523px;font-size:9.330px;color:#fff;text-shadow:0 0 .3px #fff">Мастерская</div>
<div style="left:120px;top:519px;width:99px;height:17px;background:#0f7bd0"></div>
<svg style="left:145px;top:523px" width="10" height="9" viewBox="0 0 10 9"><path d="M0 0h1.800l.4 1.200H10L9 5.200H3.200L3.500 6H9v1H2.800L1.200 1H0z" fill="#fff"/><circle cx="3.700" cy="8" r=".9" fill="#fff"/><circle cx="8" cy="8" r=".9" fill="#fff"/></svg>
<div class="t" style="left:156.500px;top:523px;font-size:9.330px;color:#fff;text-shadow:0 0 .3px #fff">Магазин</div>
<div style="left:18.500px;top:539.500px;width:98.500px;height:17px;background:#cfcfcf"></div>
<svg style="left:30px;top:543px" width="9" height="9" viewBox="0 0 9 9"><path d="M4.500 0L8 3.500H5.800V6H3.200V3.500H1z" fill="#222"/><rect x="0" y="6.800" width="9" height="2.200" fill="#222"/></svg>
<div class="t" style="left:42.500px;top:543.500px;font-size:9.330px;color:#333">Открыть файл</div>
<div style="left:120px;top:539.500px;width:99px;height:17px;background:#cfcfcf"></div>
<svg style="left:134.500px;top:543.500px" width="9" height="9" viewBox="0 0 9 9"><circle cx="4.500" cy="4.500" r="4.200" fill="#222"/><path d="M2 2.500C3 2 4 3 3.500 4S2.500 5 3 6.500M5.500 2C6.500 2 7 3 6.500 4S5 5 6 6.500" stroke="#cfcfcf" stroke-width=".8" fill="none"/></svg>
<div class="t" style="left:145.500px;top:543.500px;font-size:9.330px;color:#333">Открыть URL</div>
<!-- social -->
<svg style="left:394px;top:538px" width="55" height="17" viewBox="0 0 55 17">
<rect x=".5" y=".5" width="16" height="16" rx="2.500" fill="#1a7cc8"/><circle cx="11" cy="6.500" r="2.800" fill="none" stroke="#fff" stroke-width="1.300"/><path d="M1 9l5 2.200L8.800 8" stroke="#fff" stroke-width="1.300" fill="none"/><circle cx="5.800" cy="11.800" r="2.100" fill="#fff"/><circle cx="5.800" cy="11.800" r="1" fill="#1a7cc8"/>
<rect x="19.500" y=".5" width="16" height="16" rx="2.500" fill="#1a7cc8"/><path d="M32.500 5.200c-.5.200-.9.300-1.400.4.500-.3.900-.8 1.100-1.300-.5.300-1 .5-1.500.6a2.400 2.400 0 0 0-4.100 2.200c-2-.1-3.700-1-4.900-2.500-.6 1.100-.3 2.500.8 3.200-.4 0-.8-.1-1.100-.3 0 1.200.8 2.200 1.900 2.400-.4.100-.7.100-1.100 0 .3 1 1.200 1.700 2.200 1.700-1 .8-2.300 1.200-3.500 1 1.100.7 2.400 1.100 3.700 1.100 4.400 0 6.800-3.700 6.800-6.800v-.3c.4-.4.800-.8 1.100-1.400z" fill="#fff"/>
<rect x="38.500" y=".5" width="16" height="16" rx="2.500" fill="#1a7cc8"/><path d="M49.500 16.500v-6h2l.3-2.300h-2.300V6.700c0-.7.200-1.100 1.200-1.100h1.200V3.500c-.2 0-.9-.1-1.800-.1-1.800 0-3 1.100-3 3.100v1.700h-2v2.300h2v6z" fill="#fff"/></svg>
<!-- ok/cancel -->
<div style="left:624px;top:536px;width:63px;height:17px;background:#0f7bd0"></div>
<div class="t" style="left:624px;top:540px;width:63px;text-align:center;font-size:9.330px;color:#fff">OK</div>
<div style="left:690px;top:536px;width:63px;height:17px;background:#cfcfcf"></div>
<div class="t" style="left:690px;top:540px;width:63px;text-align:center;font-size:9.330px;color:#333">Отмена</div>
<!--/BOTTOM-->
</div>

<!-- DESKTOP ICONS -->
<svg class="abs" style="left:14px;top:5px" width="23" height="20" viewBox="0 0 23 20">
<path d="M8 2L21.500 0.500L21 12.500L7.500 13.500z" fill="#e6ecf4"/><path d="M9 3L20.500 1.700L20 11.500L8.600 12.400z" fill="#1838c0"/><path d="M9 3L14 2.400L17 11.700L8.600 12.400z" fill="#2c58e0"/>
<path d="M1 5.500L6 4.500L6.500 15L1.500 15.500z" fill="#d4dae4"/><path d="M10 13.500L18 13L19 16.500C15 18.500 11 18.500 8.500 17z" fill="#c8ccd4"/><ellipse cx="13.500" cy="17.500" rx="6" ry="1.800" fill="#e4e8ee"/></svg>
<div class="dl" style="left:25px;top:29.500px">Компьютер</div>
<svg class="abs" style="left:68px;top:5px" width="17" height="20" viewBox="0 0 17 20">
<path d="M1 2.500C5 1 12 1 16 2.500L14 18.500C11 20 6 20 3 18.500z" fill="#5c7084" opacity=".9"/><path d="M2.500 4C6 5 11 5 14.500 4L13.200 17.500C10.500 18.500 6.500 18.500 3.800 17.500z" fill="#2c3e54"/><ellipse cx="8.500" cy="2.800" rx="7.500" ry="1.800" fill="#8c9cac"/><ellipse cx="8.500" cy="2.800" rx="6" ry="1.100" fill="#3c4c5c"/><path d="M5 9L9 7L11 12L7 14z" fill="#4c6888" opacity=".8"/><path d="M3.500 16.500C6.500 18 10.500 18 13.500 16.500L13.200 18.500C10.500 19.800 6.500 19.800 3.800 18.500z" fill="#a8b4c0"/></svg>
<div class="dl" style="left:76px;top:29.500px">Корзина</div>
<svg class="abs" style="left:16px;top:62px" width="16" height="23" viewBox="0 0 16 23"><path d="M0 2L5 0L6 1.500L10 1L10 17L1.500 21z" fill="#e8d078"/><path d="M5 4L14.500 2.500L14.500 17.500L5 22.500z" fill="#f4e49c"/><path d="M5 4L5 22.500L1.500 21L0.500 4.500z" fill="#d8bc5c"/><path d="M9 14L14.500 12L14.500 17.500L5 22.500z" fill="#e4cc74"/></svg>
<div class="dl" style="left:25.500px;top:87.500px">Игры</div>
<svg class="abs" style="left:66px;top:62px" width="16" height="23" viewBox="0 0 16 23"><path d="M0 2L5 0L6 1.500L10 1L10 17L1.500 21z" fill="#e8d078"/><path d="M5 4L14.500 2.500L14.500 17.500L5 22.500z" fill="#f4e49c"/><path d="M5 4L5 22.500L1.500 21L0.500 4.500z" fill="#d8bc5c"/><path d="M9 14L14.500 12L14.500 17.500L5 22.500z" fill="#e4cc74"/></svg>
<div class="dl" style="left:76px;top:87.500px">Программы</div>

<!-- CALENDAR -->
<div id="cal" class="abs" style="left:1181px;top:5px;width:82px;height:172px">
<div style="left:0;top:0;width:82px;height:84px;border-radius:2px 2px 0 0;background:linear-gradient(#f4f4f4,#e8e8e8 55%,#cfcfcf)"></div>
<svg style="left:4px;top:7px" width="5" height="5" viewBox="0 0 5 5"><path d="M5 0v5L0 2.500z" fill="#777"/></svg>
<svg style="left:73px;top:7px" width="5" height="5" viewBox="0 0 5 5"><path d="M0 0v5L5 2.500z" fill="#777"/></svg>
<div class="cd" style="left:21px;top:6px;width:40px;font-size:6.600px">ноя 17</div>
<div class="cd" style="left:1.0px;top:18.500px;color:#6a6a6a">П</div>
<div class="cd" style="left:12.4px;top:18.500px;color:#6a6a6a">В</div>
<div class="cd" style="left:24.0px;top:18.500px;color:#d8681c">С</div>
<div class="cd" style="left:35.0px;top:18.500px;color:#6a6a6a">Ч</div>
<div class="cd" style="left:46.6px;top:18.500px;color:#6a6a6a">П</div>
<div class="cd" style="left:58.0px;top:18.500px;color:#6a6a6a">С</div>
<div class="cd" style="left:69.0px;top:18.500px;color:#6a6a6a">В</div>
<div class="cd" style="left:-1.5px;top:27px;text-align:right;color:#b4b4b4">30</div>
<div class="cd" style="left:9.9px;top:27px;text-align:right;color:#b4b4b4">31</div>
<div class="cd" style="left:21.5px;top:27px;text-align:right;color:#111">1</div>
<div class="cd" style="left:32.5px;top:27px;text-align:right;color:#111">2</div>
<div class="cd" style="left:44.1px;top:27px;text-align:right;color:#111">3</div>
<div class="cd" style="left:55.5px;top:27px;text-align:right;color:#111">4</div>
<div class="cd" style="left:66.5px;top:27px;text-align:right;color:#111">5</div>
<div class="cd" style="left:-1.5px;top:35.6px;text-align:right;color:#111">6</div>
<div class="cd" style="left:9.9px;top:35.6px;text-align:right;color:#111">7</div>
<div class="cd" style="left:21.5px;top:35.6px;text-align:right;color:#111">8</div>
<div class="cd" style="left:32.5px;top:35.6px;text-align:right;color:#111">9</div>
<div class="cd" style="left:44.1px;top:35.6px;text-align:right;color:#111">10</div>
<div class="cd" style="left:55.5px;top:35.6px;text-align:right;color:#111">11</div>
<div class="cd" style="left:66.5px;top:35.6px;text-align:right;color:#111">12</div>
<div class="cd" style="left:-1.5px;top:44.2px;text-align:right;color:#111">13</div>
<div class="cd" style="left:9.9px;top:44.2px;text-align:right;color:#111">14</div>
<div class="cd" style="left:21.5px;top:44.2px;text-align:right;color:#111">15</div>
<div class="cd" style="left:32.5px;top:44.2px;text-align:right;color:#111">16</div>
<div class="cd" style="left:44.1px;top:44.2px;text-align:right;color:#111">17</div>
<div class="cd" style="left:55.5px;top:44.2px;text-align:right;color:#111">18</div>
<div class="cd" style="left:66.5px;top:44.2px;text-align:right;color:#111">19</div>
<div class="cd" style="left:-1.5px;top:52.8px;text-align:right;color:#111">20</div>
<div class="cd" style="left:9.9px;top:52.8px;text-align:right;color:#111">21</div>
<div class="cd" style="left:21.5px;top:52.8px;text-align:right;color:#111">22</div>
<div class="cd" style="left:32.5px;top:52.8px;text-align:right;color:#111">23</div>
<div class="cd" style="left:44.1px;top:52.8px;text-align:right;color:#111">24</div>
<div class="cd" style="left:55.5px;top:52.8px;text-align:right;color:#111">25</div>
<div class="cd" style="left:66.5px;top:52.8px;text-align:right;color:#111">26</div>
<div class="cd" style="left:-1.5px;top:61.4px;text-align:right;color:#111">27</div>
<div class="cd" style="left:9.9px;top:61.4px;text-align:right;color:#111">28</div>
<div style="left:24.5px;top:60.2px;width:10.500px;height:8px;background:#e8690c"></div>
<div class="cd" style="left:21.5px;top:61.4px;text-align:right;color:#fff">29</div>
<div class="cd" style="left:32.5px;top:61.4px;text-align:right;color:#111">30</div>
<div class="cd" style="left:44.1px;top:61.4px;text-align:right;color:#b4b4b4">1</div>
<div class="cd" style="left:55.5px;top:61.4px;text-align:right;color:#b4b4b4">2</div>
<div class="cd" style="left:66.5px;top:61.4px;text-align:right;color:#b4b4b4">3</div>
<div style="left:0;top:87px;width:82px;height:84.500px;border-radius:0 0 2px 2px;background:linear-gradient(#f2700c,#ea6a0a 50%,#dc5e06)"></div>
<svg style="left:0;top:79px" width="82" height="13" viewBox="0 0 82 13"><g id="rg"><rect x="3.500" y="1" width="2.200" height="10" rx="1.100" fill="#e8e8e8" stroke="#777" stroke-width=".5"/></g><use href="#rg" x="7.200"/><use href="#rg" x="14.400"/><use href="#rg" x="21.600"/><use href="#rg" x="28.800"/><use href="#rg" x="36"/><use href="#rg" x="43.200"/><use href="#rg" x="50.400"/><use href="#rg" x="57.600"/><use href="#rg" x="64.800"/><use href="#rg" x="72"/></svg>
<div class="t" style="left:0;top:96px;width:82px;text-align:center;font-size:8.600px;color:#fff;line-height:1">среда</div>
<div class="t" style="left:0;top:107px;width:82px;text-align:center;font-size:46px;color:#fff;line-height:1;-webkit-text-stroke:1.100px #ea690a;transform:scaleX(1.020)">29</div>
<div class="t" style="left:0;top:157px;width:82px;text-align:center;font-size:8.700px;color:#fff;line-height:1">Ноябрь 2017</div>
</div>

<!-- TASKBAR -->
<div id="tb" class="abs" style="left:0;top:700px;width:1280px;height:20px;background:linear-gradient(#0b0b0d,#040405);border-top:1px solid #26262a">

<!-- start orb -->
<svg style="left:4px;top:-5px" width="28" height="26" viewBox="0 0 28 26"><radialGradient id="orb" cx=".5" cy=".35" r=".7"><stop offset="0" stop-color="#7cc4f0"/><stop offset=".5" stop-color="#2c74b8"/><stop offset="1" stop-color="#0c2c58"/></radialGradient><circle cx="14" cy="14" r="12.500" fill="url(#orb)" stroke="#1c4c80" stroke-width=".8"/><path d="M8 9.500C10 8.500 11.500 8.700 13 9.500L12.300 13.500C10.800 12.800 9.300 12.700 7.300 13.600z" fill="#f05a28"/><path d="M14 9.800C15.800 10.600 17.500 10.400 19.500 9.400L18.800 13.400C17 14.300 15.200 14.500 13.300 13.700z" fill="#7cc028"/><path d="M7 14.800C9 13.900 10.600 14 12.100 14.800L11.400 18.800C9.900 18 8.300 18 6.300 18.900z" fill="#28a0e8"/><path d="M13.100 15C14.900 15.800 16.700 15.600 18.600 14.700L17.900 18.700C16.100 19.600 14.300 19.800 12.400 19z" fill="#f8c020"/></svg>
<!-- quick launch -->
<svg style="left:48px;top:3px" width="12" height="12" viewBox="0 0 12 12"><rect x="2.500" y="1" width="9" height="7" fill="#d8d8d8"/><rect x="3.500" y="2" width="7" height="5" fill="#1c6c2c"/><rect x=".5" y="3" width="2" height="7" fill="#b8b8b8"/><rect x="5" y="8.500" width="4" height="2" fill="#c8c8c8"/></svg>
<svg style="left:79px;top:3px" width="12" height="12" viewBox="0 0 12 12"><circle cx="6" cy="6" r="5.500" fill="#e8c020"/><path d="M6 6L1.200 3.200A5.500 5.500 0 0 1 10.800 3.200z" fill="#d83828"/><path d="M6 6L1.200 3.200A5.500 5.500 0 0 0 6 11.500z" fill="#3c9c3c"/><circle cx="6" cy="6" r="2.600" fill="#f0f0f0"/><circle cx="6" cy="6" r="2" fill="#3c7cd8"/></svg>
<svg style="left:109px;top:3px" width="12" height="12" viewBox="0 0 12 12"><ellipse cx="6" cy="6" rx="5" ry="5.500" fill="#e01c24"/><ellipse cx="6" cy="6" rx="2.200" ry="3.800" fill="#0a0a0a"/></svg>
<svg style="left:141px;top:4px" width="11" height="11" viewBox="0 0 11 11"><circle cx="5.500" cy="5.500" r="5.200" fill="#f4f4f4"/><path d="M5.500 2.500L8 7.500L3 7.500z" fill="#0a0a0a"/><path d="M1.500 8.500Q5.500 6.500 9.500 8.500L8 10Q5.500 9 3 10z" fill="#0a0a0a"/></svg>
<svg style="left:171px;top:3px" width="12" height="12" viewBox="0 0 12 12"><circle cx="6" cy="6" r="5.500" fill="#3c78d8"/><circle cx="5" cy="6" r="2" fill="none" stroke="#f0d040" stroke-width="1.200"/><circle cx="8" cy="6" r="1.500" fill="#f0d040"/></svg>
<svg style="left:202px;top:3.500px" width="12" height="11" viewBox="0 0 12 11"><rect width="12" height="11" rx="2" fill="#1c84e0"/><path d="M2.500 8V4.500H9.500V8M5 8V6H7V8" stroke="#fff" stroke-width="1.100" fill="none"/></svg>
<!-- task buttons -->
<div style="left:224px;top:0;width:28px;height:20px;border:1px solid #5a5a5a;border-bottom:0;border-radius:2px 2px 0 0;background:linear-gradient(#3c3c3c,#1a1a1a 50%,#0c0c0c)"></div>
<svg style="left:232px;top:3px" width="13" height="13" viewBox="0 0 13 13"><circle cx="6.500" cy="6.500" r="6" fill="#74b02c"/><path d="M4 3.500V7.500A2.500 2.500 0 0 0 9 7.500V3.500" stroke="#fff" stroke-width="1.600" fill="none"/></svg>
<div style="left:258px;top:0;width:24px;height:20px;border:1px solid #4a4a4a;border-bottom:0;border-radius:2px 2px 0 0;background:#141414"></div>
<div style="left:255px;top:0;width:23px;height:20px;border:1px solid #5a5a5a;border-bottom:0;border-radius:2px 2px 0 0;background:linear-gradient(#3c3c3c,#1a1a1a 50%,#0c0c0c)"></div>
<svg style="left:260px;top:4px" width="13" height="12" viewBox="0 0 13 12"><path d="M0 1h5l1 1.500h7V11H0z" fill="#e8c860"/><rect x="1" y="4" width="11" height="7" fill="#f4e090"/><rect x="2.500" y="6" width="8" height="5" fill="#5cb4d8"/></svg>
<div style="left:285px;top:0;width:28.500px;height:20px;border:1px solid #9a9a9a;border-bottom:0;border-radius:2px 2px 0 0;background:linear-gradient(#8c8c8c,#5c5c5c 45%,#3a3a3a 55%,#2c2c2c)"></div>
<svg style="left:293px;top:4px" width="13" height="11" viewBox="0 0 13 11"><rect width="13" height="11" fill="#1c64c8"/><path d="M6.500 1.500L9 4H4zM6.500 9.500L9 7H4zM1.500 5.500L4 3V8zM11.500 5.500L9 3V8z" fill="#fff"/></svg>
<div style="left:316px;top:0;width:28.500px;height:20px;border:1px solid #5a5a5a;border-bottom:0;border-radius:2px 2px 0 0;background:linear-gradient(#3c3c3c,#1a1a1a 50%,#0c0c0c)"></div>
<svg style="left:325px;top:3.500px" width="11" height="12" viewBox="0 0 11 12"><rect width="11" height="12" fill="#f0f0d8"/><path d="M1.500 6h8M5.500 3v6" stroke="#a04020" stroke-width="1"/><circle cx="5.500" cy="6" r="1.500" fill="#3c6c2c"/></svg>
<!-- tray -->
<svg style="left:964px;top:4px" width="11" height="11" viewBox="0 0 11 11"><g fill="#e8e8e8"><rect x="0" y="0" width="4.500" height="4.500"/><rect x="6" y="0" width="4.500" height="4.500"/><rect x="0" y="6" width="4.500" height="4.500"/><rect x="6" y="6" width="4.500" height="4.500"/></g><g fill="#222"><rect x="1.200" y="1.200" width="2" height="2"/><rect x="7.200" y="1.200" width="2" height="2"/><rect x="1.200" y="7.200" width="2" height="2"/><rect x="7.200" y="7.200" width="2" height="2"/></g></svg>
<svg style="left:980px;top:4px" width="11" height="11" viewBox="0 0 11 11"><path d="M0 0h11v11H0z" fill="#d82c34"/><path d="M2 9L5 2l1 3l3-3l-2 7z" fill="#f4f4f4"/><rect x="6" y="6" width="5" height="5" fill="#e8e8e8"/></svg>
<svg style="left:997px;top:3px" width="8" height="13" viewBox="0 0 8 13"><ellipse cx="4" cy="6.500" rx="3.800" ry="6.200" fill="#2c8ce0"/><path d="M2 4.500l4 4L4 10.500v-8l2 2l-4 4" stroke="#fff" stroke-width=".9" fill="none"/></svg>
<svg style="left:1011px;top:3.500px" width="12" height="12" viewBox="0 0 12 12"><circle cx="6" cy="6" r="5.700" fill="#74b02c"/><path d="M3.800 3V7A2.200 2.200 0 0 0 8.200 7V3" stroke="#fff" stroke-width="1.500" fill="none"/></svg>
<svg style="left:1027px;top:3.500px" width="12" height="12" viewBox="0 0 12 12"><circle cx="7" cy="5" r="4.500" fill="#2c84d8"/><path d="M3 4C5 2 8 3 9 5S8 8 6 7" fill="#5cb43c"/><path d="M0 7.500L5 5.500V11z" fill="#e8b020"/></svg>
<svg style="left:1043px;top:3.500px" width="12" height="11" viewBox="0 0 12 11"><rect width="12" height="11" rx="2" fill="#1c84e0"/><path d="M2.500 8V4.500H9.500V8M5 8V6H7V8" stroke="#fff" stroke-width="1.100" fill="none"/></svg>
<svg style="left:1058px;top:3.500px" width="12" height="12" viewBox="0 0 12 12"><path d="M1 1.500L5.500 0L10 1.500C10 6 8.500 9 5.500 11C2.500 9 1 6 1 1.500z" fill="#f4f4f4"/><circle cx="9" cy="9" r="3" fill="#3c8cd8"/></svg>
<svg style="left:1075px;top:3.500px" width="12" height="12" viewBox="0 0 12 12"><rect width="8" height="9" fill="#2c5cc8"/><rect x="3" y="3" width="9" height="9" fill="#d82c2c"/><path d="M5 4.500h5M5 7h5" stroke="#fff" stroke-width="1"/></svg>
<svg style="left:1091px;top:3px" width="11" height="13" viewBox="0 0 11 13"><rect x="1.500" y="0" width="4" height="3" fill="#b8b8b8"/><rect x=".5" y="3" width="6" height="8" fill="#8c8c8c"/><circle cx="7.500" cy="9.500" r="3.300" fill="#2ca83c"/><path d="M6 9.500l1.200 1.200L9.300 8.300" stroke="#fff" stroke-width="1" fill="none"/></svg>
<svg style="left:1106px;top:4px" width="12" height="12" viewBox="0 0 12 12"><path d="M1 0v11" stroke="#c8c8c8" stroke-width="1.200"/><path d="M1.500 1h6.500v5H1.500z" fill="#f0f0f0"/><circle cx="8.500" cy="8.500" r="3.300" fill="#d82c2c"/><path d="M7 7l3 3M10 7l-3 3" stroke="#fff" stroke-width="1"/></svg>
<svg style="left:1123px;top:4px" width="12" height="12" viewBox="0 0 12 12"><rect x="2" y="2" width="9" height="8" fill="#f0f0f0"/><rect x="4" y="4" width="8" height="7" fill="#c82c2c"/><rect x="5" y="5" width="6" height="4" fill="#f8e8e8"/><rect x="0" y="0" width="4" height="4" fill="#e8e8e8"/></svg>
<svg style="left:1140px;top:4px" width="12" height="11" viewBox="0 0 12 11"><path d="M0 3.500h3L6.500 0v11L3 7.500H0z" fill="#f4f4f4"/><path d="M8 3a3.500 3.500 0 0 1 0 5M9.500 1.500a5.800 5.800 0 0 1 0 8" stroke="#d8d8d8" stroke-width="1" fill="none"/></svg>
<div class="t" style="left:1161px;top:3px;width:40px;text-align:center;font-size:7.200px;font-style:italic;color:#f0f0f0;letter-spacing:.3px">СР, 29</div>
<div class="t" style="left:1161px;top:11px;width:40px;text-align:center;font-size:7.200px;font-style:italic;color:#f0f0f0;letter-spacing:.3px">НОЯ</div>
<!-- lcd clock -->
<div style="left:1201px;top:0;width:66px;height:20px;border-radius:3px;background:linear-gradient(#d8d8b4,#c4c49c 50%,#a8a884);border:1px solid #4c4c3c"></div>
<div class="t" style="left:1203px;top:0;width:62px;text-align:center;font-family:'Liberation Mono',monospace;font-weight:bold;font-style:italic;font-size:20px;line-height:20px;color:#1c1c10;transform:scaleX(.84);letter-spacing:-.5px">22:54</div>
<div style="left:1271px;top:-1px;width:9px;height:21px;background:linear-gradient(90deg,#1c1c1c,#3a3a3a 40%,#1a1a1a);border-left:1px solid #4a4a4a"></div>

</div>

</div>
</body>
</html>
